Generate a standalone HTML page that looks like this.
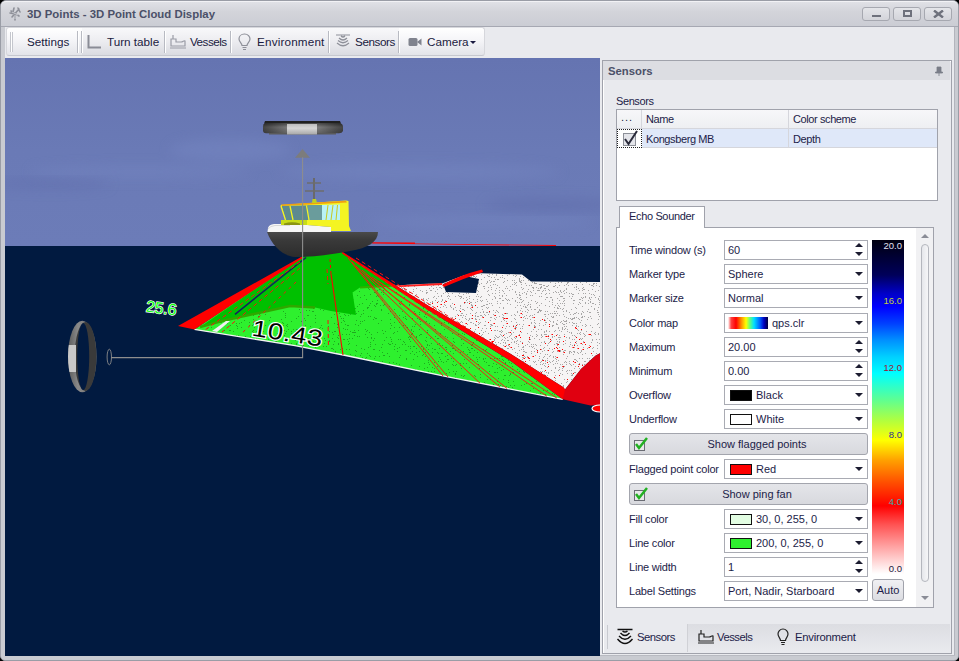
<!DOCTYPE html>
<html><head><meta charset="utf-8">
<style>
*{box-sizing:border-box;margin:0;padding:0}
html,body{width:959px;height:661px;overflow:hidden;background:#000}
body{position:relative;font-family:"Liberation Sans",sans-serif;font-size:11px;color:#1e1e46}
.a{position:absolute;white-space:nowrap}
#frame{left:0;top:0;width:959px;height:661px;background:#c9cbd1;border:1px solid #9a9da6;border-radius:6px 6px 5px 5px}
#title{left:1px;top:1px;width:957px;height:26px;background:linear-gradient(#e0e1e6,#d3d4da 40%,#cbcdd4);border-radius:5px 5px 0 0;border-top:1px solid #f2f2f5;border-bottom:1px solid #a6a8b2}
.wb{top:7px;width:28px;height:14px;border:1px solid #a6a8b0;border-radius:3px;background:linear-gradient(#e4e5e9,#d3d4da)}
#client{left:5px;top:27px;width:949px;height:628px;background:#e9eaee}
#tb{left:6px;top:27px;width:479px;height:29px;background:linear-gradient(#ffffff,#f5f5f8 45%,#e3e4e9);border:1px solid #d6d7dc;border-bottom-color:#c6c8cf;border-radius:3px}
.tbt{font-size:11.7px;color:#1a1a40;top:35px}
.sep{top:31px;width:2px;height:22px;border-left:1px solid #b8bac2;border-right:1px solid #fff}
#view{left:5px;top:58px;width:595px;height:598px;overflow:hidden}
#panel{left:602px;top:60px;width:350px;height:594px;border:1px solid #a0a2ab;background:#e9eaee;box-shadow:inset 1px 1px 0 #fff}
.lbl{left:629px;color:#1c1c48;letter-spacing:-0.2px}
.ed{left:724px;width:144px;height:20px;background:#fff;border:1px solid #a9abb3}
.ev{left:728px;color:#1c1c48}
.dd{left:855px;width:0;height:0;border-left:4px solid transparent;border-right:4px solid transparent;border-top:4px solid #1c1c30}
.up{left:855px;width:0;height:0;border-left:4px solid transparent;border-right:4px solid transparent;border-bottom:4px solid #1c1c30}
.sw{left:730px;width:22px;height:11px;border:1px solid #111}
.btn{left:629px;width:239px;height:22px;border:1px solid #a3a5ad;border-radius:3px;background:linear-gradient(#e4e5e9,#d8d9de)}
.btt{color:#1c1c48;text-align:center}
.cbl{left:874px;width:28px;text-align:right;font-size:9.5px}
</style></head><body>
<div id="frame" class="a"></div>
<div id="title" class="a"></div>
<div id="client" class="a"></div>
<div class="a" style="left:954px;top:27px;width:1px;height:629px;background:#b2b4bc"></div>
<div class="a" style="left:5px;top:655px;width:950px;height:1px;background:#b8bac1"></div>
<!-- app icon -->
<svg class="a" style="left:8px;top:6px" width="15" height="15" viewBox="0 0 15 15">
<g stroke="#8e9099" stroke-width="1.6" fill="none" stroke-linecap="round">
<path d="M7 14 L7 8 M3 5 L11 10 M11 3 L4 11 M2 7 L7 8 M10 2 L12 6 M6 2 L5 6"/></g>
<g stroke="#f4f4f6" stroke-width="0.6" fill="none"><path d="M7 13 L7 9 M4 6 L10 9"/></g>
</svg>
<div class="a" style="left:27px;top:7.5px;font-weight:bold;font-size:11.4px;color:#4b5068">3D Points - 3D Point Cloud Display</div>
<div class="a wb" style="left:862px"></div>
<div class="a wb" style="left:893px"></div>
<div class="a wb" style="left:924px"></div>
<div class="a" style="left:872px;top:15px;width:9px;height:2px;background:#6e717c"></div>
<div class="a" style="left:903px;top:10px;width:9px;height:7px;border:2px solid #6e717c;border-top-width:2px"></div>
<svg class="a" style="left:933px;top:10px" width="11" height="8" viewBox="0 0 11 8"><path d="M1 0.5 L10 7.5 M10 0.5 L1 7.5" stroke="#6e717c" stroke-width="2.4"/></svg>

<!-- toolbar -->
<div id="tb" class="a"></div>
<div class="a" style="left:10px;top:32px;width:1px;height:20px;background:#c4c6cd"></div>
<div class="a" style="left:12px;top:32px;width:1px;height:20px;background:#c4c6cd"></div>
<div class="a" style="left:11px;top:32px;width:1px;height:20px;background:#fff"></div>
<div class="a" style="left:82px;top:28px;width:317px;height:27px;background:linear-gradient(#f8f8fa,#ececf0 50%,#dadbe1)"></div>
<div class="a sep" style="left:77px"></div>
<div class="a sep" style="left:81px"></div>
<div class="a sep" style="left:164px"></div>
<div class="a sep" style="left:230px"></div>
<div class="a sep" style="left:328px"></div>
<div class="a sep" style="left:398px"></div>
<div class="a tbt" style="left:27px">Settings</div>
<div class="a tbt" style="left:107px">Turn table</div>
<div class="a tbt" style="left:190px;letter-spacing:-0.53px">Vessels</div>
<div class="a tbt" style="left:257px;letter-spacing:0.17px">Environment</div>
<div class="a tbt" style="left:355px;letter-spacing:-0.41px">Sensors</div>
<div class="a tbt" style="left:427px">Camera</div>
<div class="a" style="left:470px;top:41px;width:0;height:0;border-left:3px solid transparent;border-right:3px solid transparent;border-top:3px solid #1a1a40"></div>
<!-- toolbar icons -->
<svg class="a" style="left:86px;top:34px" width="18" height="16" viewBox="0 0 18 16"><path d="M2.5 1 V13.5 H15" stroke="#8a8c96" stroke-width="2" fill="none"/></svg>
<svg class="a" style="left:169px;top:34px" width="19" height="15" viewBox="0 0 19 15" fill="none" stroke="#9a9ca6" stroke-width="1.2"><path d="M4 1 V5 M2 5 H7 V8 H12 C14 8 15 6 16 7 V12 H2 Z M1 14 H17"/></svg>
<svg class="a" style="left:238px;top:33px" width="13" height="18" viewBox="0 0 13 18" fill="none" stroke="#8e9099" stroke-width="1.2"><path d="M6.5 1 C3 1 1 3.5 1 6 C1 9 4 10 4 12.5 H9 C9 10 12 9 12 6 C12 3.5 10 1 6.5 1 Z M4.5 14.5 H8.5 M5 16.5 H8"/></svg>
<svg class="a" style="left:335px;top:34px" width="16" height="15" viewBox="0 0 16 15" fill="none" stroke="#8e9099" stroke-width="1.2"><path d="M1 1 H15 M6 2 Q8 4 10 2 M4 4 Q8 8 12 4 M3 6.5 Q8 11 13 6.5 M2 9 Q8 14.5 14 9"/></svg>
<svg class="a" style="left:408px;top:37px" width="14" height="10" viewBox="0 0 14 10"><rect x="0.5" y="1" width="9" height="8" rx="1.5" fill="#80838e"/><path d="M9 5 L13.5 1.5 V8.5 Z" fill="#80838e"/></svg>

<!-- 3D view -->
<div id="view" class="a">
<svg width="595" height="598" viewBox="5 58 595 598" style="position:absolute;left:0;top:0">
<defs>
<linearGradient id="sky" x1="0" y1="0" x2="0" y2="1"><stop offset="0" stop-color="#6574b1"/><stop offset="0.5" stop-color="#6a7ab6"/><stop offset="1" stop-color="#6c7cb8"/></linearGradient>
<linearGradient id="hull" x1="0" y1="0" x2="0" y2="1"><stop offset="0" stop-color="#4a4a4a"/><stop offset="0.3" stop-color="#3a3a3a"/><stop offset="1" stop-color="#2c2c2c"/></linearGradient>
<linearGradient id="disc" x1="0" y1="0" x2="1" y2="0"><stop offset="0" stop-color="#454545"/><stop offset="0.3" stop-color="#7a7a7a"/><stop offset="0.7" stop-color="#7a7a7a"/><stop offset="1" stop-color="#454545"/></linearGradient><linearGradient id="discv" x1="0" y1="0" x2="0" y2="1"><stop offset="0" stop-color="#000" stop-opacity="0.45"/><stop offset="0.4" stop-color="#000" stop-opacity="0"/><stop offset="1" stop-color="#000" stop-opacity="0.2"/></linearGradient>
<linearGradient id="discc" x1="0" y1="0" x2="0" y2="1"><stop offset="0" stop-color="#bdbdbd"/><stop offset="0.4" stop-color="#d6d6d6"/><stop offset="1" stop-color="#a8a8a8"/></linearGradient>
<linearGradient id="ring" x1="0" y1="0" x2="1" y2="0"><stop offset="0" stop-color="#5a5a5a"/><stop offset="0.35" stop-color="#8a8a8a"/><stop offset="1" stop-color="#6a6a6a"/></linearGradient>
<clipPath id="ringclip"><ellipse cx="82.3" cy="356.5" rx="14.3" ry="35.8"/></clipPath>
<clipPath id="sbclip"><path d="M396 285.4 L420 284 L442 283.5 L465 275 L481 273.3 L522 274.5 L531 281.4 L600 282 L600 353.3 L595.4 355.7 L581 369 L565 389.6 L563 387 L510 353.6 L430 306.8 Z"/></clipPath>
<clipPath id="lgclip"><path d="M352.5 292.5 L360 287.5 L395 286 L430 311 L510 360.5 L562.7 399.3 L446.7 376.7 L343.3 355 L295 345.6 L194.4 329.4 L222 321 L290 306 L315 307.5 L331 311 L356 315 Z"/></clipPath>
<filter id="blur4"><feGaussianBlur stdDeviation="6"/></filter>
</defs>
<rect x="5" y="58" width="595" height="188" fill="url(#sky)"/>
<g filter="url(#blur4)" fill="#7384c0" opacity="0.6">
<ellipse cx="230" cy="150" rx="60" ry="11"/>
<ellipse cx="420" cy="172" rx="140" ry="8"/>
<ellipse cx="140" cy="172" rx="110" ry="6"/>
<ellipse cx="480" cy="222" rx="110" ry="6"/>
</g>
<g filter="url(#blur4)" fill="#5e6caa" opacity="0.5">
<ellipse cx="555" cy="205" rx="70" ry="7"/>
<ellipse cx="50" cy="184" rx="60" ry="5"/>
</g>
<rect x="5" y="246" width="595" height="410" fill="#011a40"/>
<!-- horizon red line -->
<path d="M372 242.3 L415 242.6 L415 243.6 L556 245 L556 246 L372 243.6 Z" fill="#ff0000"/>
<!-- seabed white -->
<path d="M396 285.4 L420 284 L442 283.5 L465 275 L481 273.3 L522 274.5 L531 281.4 L600 282 L600 353.3 L595.4 355.7 L581 369 L565 389.6 L563 387 L510 353.6 L430 306.8 Z" fill="#f6f4f4"/>
<g clip-path="url(#sbclip)"><path d="M511 383h1v1h-1zM539 382h1v1h-1zM595 332h1v1h-1zM511 338h1v1h-1zM546 297h1v1h-1zM443 375h1v1h-1zM527 333h1v1h-1zM557 351h1v1h-1zM599 296h1v1h-1zM420 330h1v1h-1zM473 291h1v1h-1zM419 341h1v1h-1zM573 354h1v1h-1zM406 349h1v1h-1zM497 330h1v1h-1zM563 367h1v1h-1zM553 356h1v1h-1zM436 352h1v1h-1zM399 379h1v1h-1zM531 281h1v1h-1zM411 277h1v1h-1zM444 385h1v1h-1zM457 349h1v1h-1zM403 372h1v1h-1zM514 314h1v1h-1zM508 348h1v1h-1zM446 339h1v1h-1zM455 354h1v1h-1zM471 336h1v1h-1zM397 357h1v1h-1zM417 331h1v1h-1zM563 308h1v1h-1zM500 343h1v1h-1zM417 363h1v1h-1zM461 313h1v1h-1zM590 302h1v1h-1zM527 309h1v1h-1zM403 281h1v1h-1zM540 371h1v1h-1zM423 324h1v1h-1zM423 381h1v1h-1zM470 322h1v1h-1zM413 275h1v1h-1zM571 273h1v1h-1zM450 299h1v1h-1zM409 333h1v1h-1zM492 363h1v1h-1zM497 326h1v1h-1zM414 345h1v1h-1zM557 298h1v1h-1zM595 359h1v1h-1zM465 316h1v1h-1zM418 312h1v1h-1zM481 274h1v1h-1zM500 370h1v1h-1zM426 290h1v1h-1zM459 363h1v1h-1zM421 274h1v1h-1zM411 332h1v1h-1zM520 295h1v1h-1zM570 344h1v1h-1zM444 330h1v1h-1zM526 297h1v1h-1zM583 371h1v1h-1zM429 326h1v1h-1zM560 322h1v1h-1zM425 323h1v1h-1zM503 300h1v1h-1zM396 307h1v1h-1zM547 311h1v1h-1zM401 299h1v1h-1zM443 323h1v1h-1zM550 355h1v1h-1zM543 285h1v1h-1zM406 291h1v1h-1zM450 329h1v1h-1zM462 274h1v1h-1zM593 351h1v1h-1zM480 379h1v1h-1zM471 322h1v1h-1zM414 282h1v1h-1zM419 299h1v1h-1zM545 354h1v1h-1zM458 274h1v1h-1zM549 320h1v1h-1zM491 352h1v1h-1zM512 289h1v1h-1zM546 334h1v1h-1zM543 290h1v1h-1zM494 296h1v1h-1zM556 292h1v1h-1zM475 389h1v1h-1zM454 377h1v1h-1zM552 304h1v1h-1zM581 297h1v1h-1zM436 367h1v1h-1zM557 343h1v1h-1zM446 360h1v1h-1zM495 385h1v1h-1zM519 350h1v1h-1zM416 326h1v1h-1zM408 286h1v1h-1zM423 277h1v1h-1zM527 305h1v1h-1zM457 367h1v1h-1zM576 323h1v1h-1zM461 326h1v1h-1zM548 335h1v1h-1zM471 339h1v1h-1zM440 365h1v1h-1zM413 289h1v1h-1zM454 334h1v1h-1zM539 356h1v1h-1zM553 351h1v1h-1zM414 308h1v1h-1zM450 299h1v1h-1zM587 275h1v1h-1zM413 307h1v1h-1zM501 330h1v1h-1zM459 280h1v1h-1zM407 295h1v1h-1zM468 320h1v1h-1zM531 346h1v1h-1zM429 284h1v1h-1zM488 290h1v1h-1zM511 315h1v1h-1zM564 366h1v1h-1zM572 339h1v1h-1zM545 290h1v1h-1zM547 277h1v1h-1zM400 333h1v1h-1zM487 362h1v1h-1zM475 277h1v1h-1zM401 349h1v1h-1zM558 282h1v1h-1zM519 281h1v1h-1zM583 312h1v1h-1zM477 290h1v1h-1zM414 282h1v1h-1zM511 342h1v1h-1zM490 367h1v1h-1zM407 388h1v1h-1zM584 367h1v1h-1zM576 289h1v1h-1zM599 316h1v1h-1zM486 283h1v1h-1zM571 333h1v1h-1zM415 384h1v1h-1zM502 374h1v1h-1zM403 383h1v1h-1zM523 346h1v1h-1zM399 352h1v1h-1zM565 321h1v1h-1zM493 347h1v1h-1zM399 350h1v1h-1zM414 283h1v1h-1zM419 354h1v1h-1zM425 305h1v1h-1zM502 366h1v1h-1zM480 322h1v1h-1zM584 361h1v1h-1zM544 331h1v1h-1zM508 332h1v1h-1zM534 283h1v1h-1zM528 369h1v1h-1zM527 276h1v1h-1zM475 349h1v1h-1zM418 334h1v1h-1zM401 302h1v1h-1zM574 287h1v1h-1zM523 372h1v1h-1zM553 357h1v1h-1zM520 305h1v1h-1zM398 320h1v1h-1zM473 291h1v1h-1zM569 351h1v1h-1zM447 339h1v1h-1zM439 369h1v1h-1zM483 357h1v1h-1zM509 336h1v1h-1zM457 314h1v1h-1zM499 358h1v1h-1zM460 298h1v1h-1zM558 328h1v1h-1zM589 298h1v1h-1zM450 322h1v1h-1zM452 347h1v1h-1zM477 299h1v1h-1zM430 290h1v1h-1zM523 317h1v1h-1zM406 364h1v1h-1zM412 308h1v1h-1zM439 287h1v1h-1zM511 333h1v1h-1zM466 300h1v1h-1zM501 321h1v1h-1zM556 339h1v1h-1zM522 359h1v1h-1zM476 364h1v1h-1zM555 330h1v1h-1zM478 282h1v1h-1zM404 308h1v1h-1zM551 278h1v1h-1zM569 363h1v1h-1zM467 346h1v1h-1zM486 312h1v1h-1zM562 374h1v1h-1zM540 275h1v1h-1zM560 290h1v1h-1zM499 331h1v1h-1zM444 276h1v1h-1zM592 379h1v1h-1zM464 303h1v1h-1zM595 291h1v1h-1zM599 279h1v1h-1zM557 287h1v1h-1zM510 286h1v1h-1zM557 341h1v1h-1zM563 354h1v1h-1zM490 282h1v1h-1zM571 298h1v1h-1zM447 378h1v1h-1zM517 305h1v1h-1zM441 364h1v1h-1zM398 369h1v1h-1zM516 341h1v1h-1zM578 277h1v1h-1zM441 301h1v1h-1zM465 372h1v1h-1zM484 342h1v1h-1zM574 339h1v1h-1zM524 351h1v1h-1zM589 293h1v1h-1zM496 381h1v1h-1zM598 362h1v1h-1zM453 284h1v1h-1zM501 387h1v1h-1zM580 322h1v1h-1zM429 330h1v1h-1zM512 298h1v1h-1zM556 386h1v1h-1zM397 321h1v1h-1zM536 345h1v1h-1zM563 385h1v1h-1zM524 374h1v1h-1zM483 332h1v1h-1zM479 356h1v1h-1zM448 285h1v1h-1zM580 383h1v1h-1zM560 364h1v1h-1zM427 300h1v1h-1zM458 388h1v1h-1zM495 284h1v1h-1zM475 341h1v1h-1zM598 314h1v1h-1zM463 389h1v1h-1zM579 382h1v1h-1zM400 317h1v1h-1zM525 283h1v1h-1zM405 329h1v1h-1zM483 343h1v1h-1zM503 371h1v1h-1zM466 335h1v1h-1zM403 300h1v1h-1zM412 327h1v1h-1zM404 295h1v1h-1zM532 315h1v1h-1zM571 373h1v1h-1zM431 333h1v1h-1zM434 339h1v1h-1zM581 339h1v1h-1zM569 361h1v1h-1zM508 385h1v1h-1zM522 347h1v1h-1zM572 284h1v1h-1zM590 301h1v1h-1zM508 340h1v1h-1zM539 310h1v1h-1zM582 344h1v1h-1zM559 294h1v1h-1zM529 338h1v1h-1zM539 305h1v1h-1zM475 358h1v1h-1zM493 381h1v1h-1zM552 299h1v1h-1zM473 381h1v1h-1zM432 342h1v1h-1zM530 307h1v1h-1zM542 336h1v1h-1zM447 325h1v1h-1zM533 287h1v1h-1zM524 273h1v1h-1zM550 321h1v1h-1zM403 341h1v1h-1zM407 339h1v1h-1zM498 342h1v1h-1zM540 288h1v1h-1zM521 284h1v1h-1zM572 294h1v1h-1zM412 341h1v1h-1zM513 325h1v1h-1zM499 307h1v1h-1zM459 333h1v1h-1zM522 289h1v1h-1zM482 328h1v1h-1zM517 340h1v1h-1zM477 286h1v1h-1zM445 326h1v1h-1zM554 276h1v1h-1zM462 289h1v1h-1zM575 372h1v1h-1zM401 277h1v1h-1zM445 292h1v1h-1zM454 274h1v1h-1zM571 309h1v1h-1zM478 365h1v1h-1zM486 304h1v1h-1zM554 336h1v1h-1zM422 336h1v1h-1zM583 347h1v1h-1zM427 382h1v1h-1zM526 352h1v1h-1zM460 364h1v1h-1zM446 362h1v1h-1zM531 385h1v1h-1zM507 275h1v1h-1zM492 354h1v1h-1zM501 378h1v1h-1zM531 351h1v1h-1zM436 341h1v1h-1zM448 383h1v1h-1zM557 341h1v1h-1zM559 300h1v1h-1zM531 300h1v1h-1zM534 351h1v1h-1zM546 382h1v1h-1zM430 302h1v1h-1zM585 353h1v1h-1zM484 388h1v1h-1zM442 313h1v1h-1zM550 313h1v1h-1zM445 300h1v1h-1zM595 297h1v1h-1zM420 290h1v1h-1zM457 289h1v1h-1zM582 284h1v1h-1zM462 322h1v1h-1zM420 328h1v1h-1zM503 342h1v1h-1zM598 363h1v1h-1zM428 298h1v1h-1zM499 353h1v1h-1zM571 375h1v1h-1zM400 285h1v1h-1zM447 345h1v1h-1zM570 318h1v1h-1zM488 287h1v1h-1zM576 337h1v1h-1zM558 370h1v1h-1zM483 337h1v1h-1zM571 379h1v1h-1zM444 375h1v1h-1zM414 334h1v1h-1zM423 276h1v1h-1zM405 370h1v1h-1zM537 351h1v1h-1zM527 388h1v1h-1zM541 334h1v1h-1zM433 297h1v1h-1zM443 287h1v1h-1zM448 295h1v1h-1zM436 309h1v1h-1zM568 285h1v1h-1zM544 280h1v1h-1zM430 360h1v1h-1zM514 282h1v1h-1zM591 285h1v1h-1zM479 323h1v1h-1zM515 327h1v1h-1zM527 318h1v1h-1zM506 299h1v1h-1zM549 320h1v1h-1zM399 354h1v1h-1zM575 278h1v1h-1zM447 296h1v1h-1zM500 331h1v1h-1zM488 367h1v1h-1zM490 324h1v1h-1zM445 350h1v1h-1zM438 285h1v1h-1zM527 374h1v1h-1zM399 314h1v1h-1zM417 375h1v1h-1zM576 385h1v1h-1zM557 324h1v1h-1zM541 349h1v1h-1zM444 337h1v1h-1zM545 316h1v1h-1zM591 306h1v1h-1zM467 389h1v1h-1zM425 368h1v1h-1zM586 372h1v1h-1zM436 377h1v1h-1zM499 290h1v1h-1zM480 385h1v1h-1zM533 361h1v1h-1zM490 371h1v1h-1zM506 370h1v1h-1zM442 324h1v1h-1zM448 365h1v1h-1zM443 282h1v1h-1zM483 311h1v1h-1zM516 285h1v1h-1zM398 386h1v1h-1zM487 354h1v1h-1zM555 279h1v1h-1zM455 307h1v1h-1zM566 311h1v1h-1zM482 300h1v1h-1zM564 324h1v1h-1zM541 296h1v1h-1zM532 282h1v1h-1zM495 338h1v1h-1zM523 355h1v1h-1zM450 362h1v1h-1zM426 370h1v1h-1zM497 346h1v1h-1zM401 287h1v1h-1zM553 286h1v1h-1zM585 303h1v1h-1zM461 329h1v1h-1zM498 337h1v1h-1zM408 370h1v1h-1zM446 355h1v1h-1zM492 274h1v1h-1zM421 306h1v1h-1zM460 308h1v1h-1zM483 343h1v1h-1zM534 338h1v1h-1zM502 339h1v1h-1zM541 381h1v1h-1zM421 354h1v1h-1zM509 376h1v1h-1zM561 282h1v1h-1zM536 349h1v1h-1zM567 370h1v1h-1zM407 322h1v1h-1zM436 322h1v1h-1zM516 294h1v1h-1zM522 342h1v1h-1zM552 349h1v1h-1zM410 327h1v1h-1zM522 326h1v1h-1zM468 340h1v1h-1zM498 349h1v1h-1zM475 319h1v1h-1zM531 309h1v1h-1zM519 356h1v1h-1zM465 344h1v1h-1zM468 357h1v1h-1zM579 368h1v1h-1zM471 276h1v1h-1zM399 371h1v1h-1zM458 347h1v1h-1zM406 354h1v1h-1zM436 325h1v1h-1zM589 360h1v1h-1zM495 279h1v1h-1zM476 368h1v1h-1zM497 279h1v1h-1zM544 365h1v1h-1zM477 282h1v1h-1zM453 327h1v1h-1zM580 334h1v1h-1zM460 369h1v1h-1zM458 278h1v1h-1zM529 285h1v1h-1zM581 389h1v1h-1zM515 291h1v1h-1zM458 350h1v1h-1zM576 287h1v1h-1zM408 352h1v1h-1zM502 331h1v1h-1zM426 299h1v1h-1zM409 318h1v1h-1zM531 292h1v1h-1zM427 319h1v1h-1zM509 290h1v1h-1zM566 326h1v1h-1zM512 349h1v1h-1zM463 354h1v1h-1zM545 360h1v1h-1zM503 319h1v1h-1zM595 368h1v1h-1zM531 377h1v1h-1zM431 310h1v1h-1zM583 289h1v1h-1zM457 334h1v1h-1zM425 337h1v1h-1zM475 373h1v1h-1zM525 352h1v1h-1zM487 308h1v1h-1zM465 351h1v1h-1zM571 365h1v1h-1zM540 362h1v1h-1zM547 297h1v1h-1zM558 308h1v1h-1zM588 303h1v1h-1zM444 304h1v1h-1zM524 356h1v1h-1zM446 385h1v1h-1zM570 278h1v1h-1zM556 280h1v1h-1zM398 307h1v1h-1zM462 327h1v1h-1zM402 352h1v1h-1zM405 286h1v1h-1zM452 342h1v1h-1zM467 282h1v1h-1zM589 284h1v1h-1zM569 293h1v1h-1zM536 303h1v1h-1zM557 320h1v1h-1zM519 334h1v1h-1zM486 299h1v1h-1zM482 316h1v1h-1zM522 368h1v1h-1zM430 380h1v1h-1zM415 375h1v1h-1zM426 330h1v1h-1zM555 380h1v1h-1zM592 371h1v1h-1zM450 329h1v1h-1zM504 368h1v1h-1zM462 322h1v1h-1zM434 320h1v1h-1zM435 356h1v1h-1zM548 314h1v1h-1zM470 343h1v1h-1zM590 368h1v1h-1zM443 327h1v1h-1zM563 320h1v1h-1zM544 285h1v1h-1zM514 385h1v1h-1zM478 283h1v1h-1zM535 283h1v1h-1zM506 345h1v1h-1zM541 335h1v1h-1zM571 332h1v1h-1zM472 378h1v1h-1zM594 274h1v1h-1zM415 312h1v1h-1zM450 389h1v1h-1zM565 350h1v1h-1zM416 361h1v1h-1zM473 336h1v1h-1zM581 370h1v1h-1zM573 314h1v1h-1zM468 385h1v1h-1zM432 301h1v1h-1zM487 357h1v1h-1zM581 314h1v1h-1zM489 389h1v1h-1zM426 314h1v1h-1zM577 329h1v1h-1zM541 349h1v1h-1zM571 389h1v1h-1zM467 329h1v1h-1zM531 375h1v1h-1zM474 331h1v1h-1zM477 301h1v1h-1zM498 366h1v1h-1zM528 304h1v1h-1zM417 319h1v1h-1zM489 276h1v1h-1zM489 359h1v1h-1zM497 347h1v1h-1zM495 374h1v1h-1zM445 367h1v1h-1zM540 320h1v1h-1zM495 342h1v1h-1zM435 380h1v1h-1zM547 345h1v1h-1zM441 295h1v1h-1zM418 370h1v1h-1zM512 385h1v1h-1zM468 376h1v1h-1zM401 301h1v1h-1zM528 280h1v1h-1zM535 293h1v1h-1zM541 310h1v1h-1zM401 356h1v1h-1zM504 281h1v1h-1zM544 342h1v1h-1zM474 373h1v1h-1zM535 283h1v1h-1zM481 283h1v1h-1zM466 367h1v1h-1zM422 388h1v1h-1zM476 283h1v1h-1zM402 354h1v1h-1zM563 291h1v1h-1zM420 368h1v1h-1zM562 327h1v1h-1zM458 364h1v1h-1zM452 335h1v1h-1zM591 389h1v1h-1zM529 316h1v1h-1zM591 331h1v1h-1zM496 317h1v1h-1zM482 376h1v1h-1zM481 359h1v1h-1zM430 336h1v1h-1zM520 341h1v1h-1zM580 282h1v1h-1zM577 352h1v1h-1zM407 325h1v1h-1zM589 378h1v1h-1zM566 317h1v1h-1zM396 376h1v1h-1zM492 379h1v1h-1zM418 386h1v1h-1zM514 342h1v1h-1zM559 276h1v1h-1zM530 319h1v1h-1zM577 274h1v1h-1zM424 326h1v1h-1zM503 291h1v1h-1zM458 367h1v1h-1zM437 354h1v1h-1zM492 360h1v1h-1zM438 314h1v1h-1zM448 322h1v1h-1zM504 340h1v1h-1zM470 308h1v1h-1zM411 333h1v1h-1zM474 366h1v1h-1zM425 311h1v1h-1zM561 292h1v1h-1zM594 295h1v1h-1zM411 369h1v1h-1zM513 275h1v1h-1zM545 334h1v1h-1zM405 313h1v1h-1zM423 298h1v1h-1zM443 318h1v1h-1zM451 348h1v1h-1zM456 349h1v1h-1zM579 333h1v1h-1zM548 338h1v1h-1zM453 329h1v1h-1zM443 387h1v1h-1zM467 324h1v1h-1zM440 389h1v1h-1zM589 312h1v1h-1zM556 343h1v1h-1zM536 334h1v1h-1zM462 335h1v1h-1zM499 316h1v1h-1zM565 343h1v1h-1zM593 284h1v1h-1zM519 383h1v1h-1zM452 324h1v1h-1zM408 300h1v1h-1zM430 375h1v1h-1zM494 340h1v1h-1zM599 339h1v1h-1zM594 308h1v1h-1zM597 280h1v1h-1zM564 303h1v1h-1zM398 384h1v1h-1zM516 388h1v1h-1zM491 330h1v1h-1zM599 304h1v1h-1zM578 326h1v1h-1zM551 384h1v1h-1zM436 326h1v1h-1zM436 371h1v1h-1zM478 291h1v1h-1zM462 389h1v1h-1zM528 289h1v1h-1zM559 367h1v1h-1zM554 307h1v1h-1zM528 341h1v1h-1zM409 292h1v1h-1zM542 371h1v1h-1zM441 273h1v1h-1zM448 378h1v1h-1zM434 378h1v1h-1zM428 283h1v1h-1zM486 307h1v1h-1zM553 364h1v1h-1zM531 285h1v1h-1zM518 361h1v1h-1zM515 283h1v1h-1zM587 348h1v1h-1zM535 382h1v1h-1zM525 311h1v1h-1zM400 374h1v1h-1zM444 326h1v1h-1zM445 360h1v1h-1zM419 373h1v1h-1zM508 299h1v1h-1zM405 342h1v1h-1zM501 340h1v1h-1zM522 293h1v1h-1zM475 313h1v1h-1zM475 324h1v1h-1zM415 344h1v1h-1zM474 332h1v1h-1zM566 364h1v1h-1zM413 319h1v1h-1zM415 360h1v1h-1zM431 286h1v1h-1zM566 323h1v1h-1zM569 332h1v1h-1zM587 373h1v1h-1zM427 356h1v1h-1zM509 274h1v1h-1zM492 364h1v1h-1zM577 333h1v1h-1zM456 310h1v1h-1zM540 287h1v1h-1zM513 371h1v1h-1zM398 382h1v1h-1zM580 299h1v1h-1zM553 292h1v1h-1zM470 353h1v1h-1zM492 342h1v1h-1zM587 311h1v1h-1zM482 369h1v1h-1zM496 344h1v1h-1zM566 284h1v1h-1zM461 297h1v1h-1zM447 321h1v1h-1zM583 287h1v1h-1zM480 312h1v1h-1zM466 345h1v1h-1zM516 365h1v1h-1zM559 315h1v1h-1zM510 378h1v1h-1zM493 284h1v1h-1zM422 291h1v1h-1zM555 285h1v1h-1zM429 359h1v1h-1zM557 363h1v1h-1zM441 296h1v1h-1zM445 324h1v1h-1zM405 380h1v1h-1zM514 348h1v1h-1zM576 284h1v1h-1zM421 302h1v1h-1zM404 293h1v1h-1zM427 328h1v1h-1zM500 371h1v1h-1zM414 316h1v1h-1zM505 338h1v1h-1zM431 355h1v1h-1zM448 371h1v1h-1zM433 378h1v1h-1zM572 322h1v1h-1zM519 315h1v1h-1zM501 352h1v1h-1zM399 366h1v1h-1zM498 351h1v1h-1zM575 313h1v1h-1zM597 374h1v1h-1zM458 357h1v1h-1zM551 340h1v1h-1zM400 306h1v1h-1zM480 297h1v1h-1zM483 312h1v1h-1zM562 329h1v1h-1zM423 344h1v1h-1zM492 299h1v1h-1zM526 315h1v1h-1zM597 310h1v1h-1zM422 351h1v1h-1zM578 293h1v1h-1zM460 371h1v1h-1zM533 388h1v1h-1zM472 343h1v1h-1zM455 318h1v1h-1zM552 337h1v1h-1zM527 291h1v1h-1zM542 364h1v1h-1zM446 339h1v1h-1zM579 363h1v1h-1zM446 345h1v1h-1zM402 353h1v1h-1zM564 298h1v1h-1zM594 283h1v1h-1zM430 304h1v1h-1zM518 346h1v1h-1zM502 362h1v1h-1zM481 315h1v1h-1zM419 384h1v1h-1zM488 307h1v1h-1zM514 386h1v1h-1zM427 330h1v1h-1zM582 290h1v1h-1zM457 388h1v1h-1zM541 342h1v1h-1zM535 344h1v1h-1zM412 344h1v1h-1zM463 294h1v1h-1zM586 387h1v1h-1zM481 349h1v1h-1zM433 288h1v1h-1zM396 309h1v1h-1zM571 387h1v1h-1zM489 303h1v1h-1zM590 346h1v1h-1zM488 379h1v1h-1zM438 296h1v1h-1zM548 343h1v1h-1zM415 331h1v1h-1zM404 324h1v1h-1zM442 373h1v1h-1zM564 290h1v1h-1zM474 369h1v1h-1zM567 381h1v1h-1zM584 389h1v1h-1zM493 351h1v1h-1zM547 354h1v1h-1zM591 275h1v1h-1zM436 298h1v1h-1zM501 332h1v1h-1zM404 291h1v1h-1zM531 322h1v1h-1zM426 345h1v1h-1zM499 295h1v1h-1zM482 339h1v1h-1zM429 306h1v1h-1zM458 345h1v1h-1zM481 279h1v1h-1zM560 373h1v1h-1zM405 365h1v1h-1zM567 373h1v1h-1zM433 324h1v1h-1zM523 349h1v1h-1zM422 333h1v1h-1zM484 325h1v1h-1zM555 389h1v1h-1zM572 345h1v1h-1zM590 325h1v1h-1zM588 309h1v1h-1zM520 386h1v1h-1zM514 380h1v1h-1zM572 325h1v1h-1zM507 288h1v1h-1zM540 287h1v1h-1zM530 315h1v1h-1zM530 339h1v1h-1zM506 326h1v1h-1zM402 314h1v1h-1zM409 310h1v1h-1zM581 351h1v1h-1zM506 366h1v1h-1zM492 349h1v1h-1zM478 369h1v1h-1zM598 312h1v1h-1zM547 385h1v1h-1zM413 304h1v1h-1zM427 381h1v1h-1zM510 304h1v1h-1zM524 384h1v1h-1zM497 279h1v1h-1zM517 361h1v1h-1zM422 340h1v1h-1zM457 342h1v1h-1zM474 357h1v1h-1zM497 303h1v1h-1zM413 389h1v1h-1zM583 384h1v1h-1zM566 320h1v1h-1zM535 326h1v1h-1zM540 376h1v1h-1zM438 301h1v1h-1zM562 368h1v1h-1zM503 345h1v1h-1zM427 388h1v1h-1zM414 285h1v1h-1zM529 374h1v1h-1zM429 288h1v1h-1zM533 346h1v1h-1zM512 273h1v1h-1zM471 304h1v1h-1zM582 311h1v1h-1zM402 314h1v1h-1zM440 281h1v1h-1zM508 387h1v1h-1zM511 377h1v1h-1zM531 323h1v1h-1zM432 318h1v1h-1zM573 347h1v1h-1zM455 278h1v1h-1zM474 276h1v1h-1zM512 388h1v1h-1zM476 312h1v1h-1zM479 336h1v1h-1zM432 372h1v1h-1zM594 333h1v1h-1zM448 298h1v1h-1zM471 382h1v1h-1zM573 387h1v1h-1zM411 298h1v1h-1zM476 380h1v1h-1zM486 388h1v1h-1zM516 275h1v1h-1zM440 354h1v1h-1zM574 344h1v1h-1zM447 341h1v1h-1zM557 303h1v1h-1zM445 385h1v1h-1zM408 356h1v1h-1zM423 312h1v1h-1zM581 377h1v1h-1zM476 388h1v1h-1zM466 384h1v1h-1zM503 364h1v1h-1zM430 315h1v1h-1zM574 372h1v1h-1zM509 326h1v1h-1zM416 294h1v1h-1zM453 383h1v1h-1zM474 288h1v1h-1zM577 361h1v1h-1zM446 307h1v1h-1zM442 365h1v1h-1zM456 337h1v1h-1zM566 310h1v1h-1zM598 307h1v1h-1zM491 375h1v1h-1zM565 340h1v1h-1zM425 348h1v1h-1zM528 302h1v1h-1zM473 387h1v1h-1zM442 358h1v1h-1zM453 308h1v1h-1zM429 354h1v1h-1zM566 284h1v1h-1zM514 282h1v1h-1zM508 340h1v1h-1zM414 340h1v1h-1zM407 273h1v1h-1zM549 348h1v1h-1zM468 341h1v1h-1zM460 327h1v1h-1zM541 284h1v1h-1zM438 309h1v1h-1zM589 297h1v1h-1zM458 295h1v1h-1zM467 366h1v1h-1zM536 276h1v1h-1zM443 374h1v1h-1zM434 387h1v1h-1zM404 352h1v1h-1zM514 369h1v1h-1zM545 322h1v1h-1zM396 387h1v1h-1zM523 280h1v1h-1zM442 281h1v1h-1zM538 372h1v1h-1zM561 389h1v1h-1zM488 314h1v1h-1zM564 334h1v1h-1zM596 277h1v1h-1zM528 310h1v1h-1zM525 378h1v1h-1zM558 360h1v1h-1zM529 368h1v1h-1zM532 295h1v1h-1zM548 372h1v1h-1zM593 294h1v1h-1zM424 350h1v1h-1zM507 303h1v1h-1zM567 329h1v1h-1zM536 371h1v1h-1zM461 373h1v1h-1zM579 374h1v1h-1zM580 303h1v1h-1zM462 335h1v1h-1zM535 301h1v1h-1zM544 350h1v1h-1zM523 306h1v1h-1zM405 298h1v1h-1zM548 364h1v1h-1zM409 346h1v1h-1zM510 384h1v1h-1zM442 314h1v1h-1zM434 350h1v1h-1zM400 350h1v1h-1zM523 376h1v1h-1zM507 337h1v1h-1zM509 365h1v1h-1zM463 382h1v1h-1zM403 282h1v1h-1zM425 389h1v1h-1zM441 345h1v1h-1zM559 342h1v1h-1zM544 374h1v1h-1zM580 303h1v1h-1zM555 291h1v1h-1zM409 312h1v1h-1zM504 278h1v1h-1zM574 313h1v1h-1zM555 367h1v1h-1zM530 372h1v1h-1zM463 370h1v1h-1zM546 336h1v1h-1zM418 356h1v1h-1zM526 294h1v1h-1zM492 305h1v1h-1zM459 293h1v1h-1zM523 361h1v1h-1zM564 379h1v1h-1zM548 373h1v1h-1zM512 280h1v1h-1zM476 325h1v1h-1zM515 319h1v1h-1zM574 300h1v1h-1zM576 278h1v1h-1zM428 335h1v1h-1zM589 370h1v1h-1zM549 290h1v1h-1zM433 368h1v1h-1zM512 339h1v1h-1zM586 278h1v1h-1zM396 303h1v1h-1zM500 386h1v1h-1zM530 291h1v1h-1zM419 323h1v1h-1zM538 311h1v1h-1zM516 327h1v1h-1zM415 277h1v1h-1zM570 364h1v1h-1zM591 366h1v1h-1zM552 302h1v1h-1zM471 305h1v1h-1zM426 343h1v1h-1zM457 326h1v1h-1zM514 284h1v1h-1zM454 319h1v1h-1zM475 316h1v1h-1zM552 300h1v1h-1zM406 293h1v1h-1zM499 347h1v1h-1zM562 280h1v1h-1zM584 316h1v1h-1zM541 361h1v1h-1zM547 386h1v1h-1zM441 332h1v1h-1zM496 380h1v1h-1zM450 321h1v1h-1zM492 373h1v1h-1zM408 300h1v1h-1zM503 317h1v1h-1zM459 296h1v1h-1zM599 343h1v1h-1zM437 334h1v1h-1zM448 324h1v1h-1zM450 349h1v1h-1zM515 370h1v1h-1zM474 333h1v1h-1zM510 335h1v1h-1zM556 359h1v1h-1zM442 383h1v1h-1zM520 299h1v1h-1zM534 322h1v1h-1zM503 282h1v1h-1zM408 361h1v1h-1zM466 319h1v1h-1zM466 352h1v1h-1zM400 339h1v1h-1zM442 367h1v1h-1zM463 338h1v1h-1zM496 345h1v1h-1zM562 364h1v1h-1zM451 307h1v1h-1zM422 319h1v1h-1zM410 292h1v1h-1zM582 372h1v1h-1zM488 290h1v1h-1zM592 303h1v1h-1zM581 380h1v1h-1zM426 275h1v1h-1zM478 380h1v1h-1zM494 330h1v1h-1zM417 382h1v1h-1zM493 314h1v1h-1zM461 371h1v1h-1zM528 358h1v1h-1zM410 311h1v1h-1zM496 350h1v1h-1zM457 335h1v1h-1zM406 297h1v1h-1zM434 338h1v1h-1zM548 289h1v1h-1zM404 299h1v1h-1zM475 325h1v1h-1zM504 334h1v1h-1zM535 361h1v1h-1zM430 339h1v1h-1zM576 343h1v1h-1zM462 313h1v1h-1zM581 330h1v1h-1zM566 321h1v1h-1zM433 385h1v1h-1zM448 379h1v1h-1zM467 341h1v1h-1zM578 330h1v1h-1zM499 290h1v1h-1zM494 339h1v1h-1zM487 301h1v1h-1zM422 310h1v1h-1zM490 317h1v1h-1zM552 300h1v1h-1zM431 278h1v1h-1zM402 368h1v1h-1zM557 334h1v1h-1zM540 274h1v1h-1zM590 368h1v1h-1zM472 357h1v1h-1zM567 281h1v1h-1zM451 344h1v1h-1zM572 318h1v1h-1zM566 288h1v1h-1zM594 384h1v1h-1zM491 303h1v1h-1zM596 353h1v1h-1zM462 284h1v1h-1zM505 288h1v1h-1zM496 336h1v1h-1zM411 335h1v1h-1zM494 315h1v1h-1zM468 336h1v1h-1zM576 308h1v1h-1zM452 293h1v1h-1zM499 298h1v1h-1zM517 371h1v1h-1zM438 317h1v1h-1zM566 364h1v1h-1zM457 339h1v1h-1zM419 368h1v1h-1zM483 389h1v1h-1zM504 375h1v1h-1zM434 334h1v1h-1zM545 305h1v1h-1zM575 382h1v1h-1zM537 312h1v1h-1zM575 275h1v1h-1zM496 288h1v1h-1zM489 389h1v1h-1zM412 389h1v1h-1zM499 307h1v1h-1zM409 321h1v1h-1zM522 381h1v1h-1zM545 311h1v1h-1zM516 365h1v1h-1zM479 386h1v1h-1zM460 282h1v1h-1zM402 277h1v1h-1zM484 314h1v1h-1zM491 345h1v1h-1zM472 306h1v1h-1zM567 386h1v1h-1zM443 355h1v1h-1zM516 322h1v1h-1zM553 316h1v1h-1zM488 276h1v1h-1zM543 363h1v1h-1zM451 371h1v1h-1zM415 353h1v1h-1zM408 352h1v1h-1zM534 325h1v1h-1zM552 326h1v1h-1zM412 308h1v1h-1zM413 379h1v1h-1zM514 385h1v1h-1zM511 321h1v1h-1zM494 277h1v1h-1zM430 360h1v1h-1zM525 307h1v1h-1zM475 336h1v1h-1zM488 333h1v1h-1zM401 292h1v1h-1zM550 297h1v1h-1zM465 302h1v1h-1zM462 360h1v1h-1zM452 303h1v1h-1zM529 273h1v1h-1zM535 323h1v1h-1zM396 303h1v1h-1zM536 336h1v1h-1zM562 370h1v1h-1zM536 283h1v1h-1zM555 378h1v1h-1zM539 386h1v1h-1zM572 374h1v1h-1zM481 306h1v1h-1zM484 286h1v1h-1zM400 313h1v1h-1zM579 299h1v1h-1zM574 323h1v1h-1zM571 293h1v1h-1zM445 378h1v1h-1zM437 293h1v1h-1zM481 352h1v1h-1zM572 335h1v1h-1zM540 310h1v1h-1zM490 326h1v1h-1zM469 319h1v1h-1zM587 358h1v1h-1zM532 336h1v1h-1zM456 355h1v1h-1zM459 319h1v1h-1zM479 363h1v1h-1zM441 338h1v1h-1zM584 289h1v1h-1zM412 281h1v1h-1zM422 386h1v1h-1zM576 312h1v1h-1zM424 381h1v1h-1zM511 338h1v1h-1zM593 359h1v1h-1zM519 278h1v1h-1zM437 352h1v1h-1zM501 384h1v1h-1zM519 279h1v1h-1zM484 305h1v1h-1zM497 337h1v1h-1zM585 374h1v1h-1zM573 323h1v1h-1zM460 364h1v1h-1zM558 305h1v1h-1zM490 364h1v1h-1zM570 314h1v1h-1zM442 315h1v1h-1zM590 299h1v1h-1zM540 379h1v1h-1zM429 345h1v1h-1zM503 355h1v1h-1zM576 289h1v1h-1zM555 367h1v1h-1zM464 375h1v1h-1zM437 289h1v1h-1zM447 321h1v1h-1zM555 358h1v1h-1zM470 302h1v1h-1zM562 296h1v1h-1zM399 333h1v1h-1zM545 361h1v1h-1zM598 290h1v1h-1zM464 361h1v1h-1zM465 326h1v1h-1zM460 353h1v1h-1zM566 323h1v1h-1zM494 359h1v1h-1zM431 279h1v1h-1zM436 364h1v1h-1zM426 384h1v1h-1zM406 297h1v1h-1zM469 318h1v1h-1zM583 341h1v1h-1zM426 324h1v1h-1zM480 388h1v1h-1zM402 379h1v1h-1zM534 382h1v1h-1zM519 294h1v1h-1zM491 281h1v1h-1zM475 329h1v1h-1zM562 309h1v1h-1zM453 323h1v1h-1zM580 352h1v1h-1zM500 370h1v1h-1zM432 346h1v1h-1zM495 359h1v1h-1zM573 300h1v1h-1zM535 309h1v1h-1zM433 329h1v1h-1zM440 379h1v1h-1zM423 344h1v1h-1zM460 385h1v1h-1zM520 328h1v1h-1zM426 292h1v1h-1zM478 386h1v1h-1zM400 307h1v1h-1zM540 345h1v1h-1zM432 308h1v1h-1zM556 324h1v1h-1zM466 314h1v1h-1zM454 283h1v1h-1zM519 298h1v1h-1zM489 343h1v1h-1zM462 344h1v1h-1zM409 292h1v1h-1zM412 273h1v1h-1zM590 312h1v1h-1zM567 283h1v1h-1zM397 296h1v1h-1zM482 334h1v1h-1zM431 373h1v1h-1zM447 384h1v1h-1zM500 334h1v1h-1zM404 326h1v1h-1zM485 376h1v1h-1zM539 323h1v1h-1zM538 280h1v1h-1zM451 343h1v1h-1zM553 357h1v1h-1zM555 305h1v1h-1zM466 297h1v1h-1zM470 383h1v1h-1zM459 376h1v1h-1zM509 346h1v1h-1zM581 279h1v1h-1zM441 382h1v1h-1zM402 294h1v1h-1zM533 288h1v1h-1zM568 282h1v1h-1zM465 318h1v1h-1zM402 369h1v1h-1zM538 312h1v1h-1zM412 338h1v1h-1zM515 274h1v1h-1zM449 281h1v1h-1zM489 274h1v1h-1zM592 340h1v1h-1zM463 376h1v1h-1zM458 374h1v1h-1zM584 336h1v1h-1zM498 312h1v1h-1zM532 378h1v1h-1zM566 371h1v1h-1zM592 285h1v1h-1zM519 324h1v1h-1zM576 325h1v1h-1zM460 388h1v1h-1zM555 276h1v1h-1zM398 346h1v1h-1zM432 302h1v1h-1zM478 322h1v1h-1zM581 320h1v1h-1zM525 357h1v1h-1zM466 376h1v1h-1zM489 353h1v1h-1zM559 330h1v1h-1zM486 312h1v1h-1zM467 281h1v1h-1zM563 314h1v1h-1zM548 285h1v1h-1zM463 315h1v1h-1zM450 367h1v1h-1zM442 300h1v1h-1zM408 368h1v1h-1zM429 342h1v1h-1zM473 360h1v1h-1zM448 295h1v1h-1zM484 286h1v1h-1zM435 291h1v1h-1zM491 317h1v1h-1zM442 328h1v1h-1zM401 274h1v1h-1zM498 337h1v1h-1zM409 324h1v1h-1zM420 314h1v1h-1zM533 380h1v1h-1zM590 299h1v1h-1zM401 385h1v1h-1zM440 314h1v1h-1zM413 369h1v1h-1zM546 286h1v1h-1zM544 314h1v1h-1zM506 333h1v1h-1zM452 336h1v1h-1zM500 372h1v1h-1zM576 386h1v1h-1zM441 377h1v1h-1zM465 281h1v1h-1zM569 322h1v1h-1zM478 385h1v1h-1zM442 372h1v1h-1zM487 340h1v1h-1zM398 291h1v1h-1zM582 354h1v1h-1zM565 321h1v1h-1zM560 280h1v1h-1zM450 351h1v1h-1zM553 317h1v1h-1zM508 382h1v1h-1zM578 353h1v1h-1zM504 337h1v1h-1zM541 287h1v1h-1zM427 380h1v1h-1zM585 361h1v1h-1zM586 331h1v1h-1zM507 358h1v1h-1zM515 326h1v1h-1zM494 337h1v1h-1zM454 321h1v1h-1zM549 342h1v1h-1zM542 278h1v1h-1zM527 277h1v1h-1zM531 353h1v1h-1zM511 330h1v1h-1zM468 348h1v1h-1zM407 349h1v1h-1zM409 314h1v1h-1zM434 341h1v1h-1zM515 315h1v1h-1zM461 367h1v1h-1zM555 313h1v1h-1zM444 367h1v1h-1zM516 343h1v1h-1zM498 279h1v1h-1zM428 369h1v1h-1zM521 287h1v1h-1zM455 296h1v1h-1zM562 374h1v1h-1zM432 379h1v1h-1zM425 375h1v1h-1zM422 338h1v1h-1zM460 306h1v1h-1zM412 296h1v1h-1zM405 364h1v1h-1zM483 305h1v1h-1zM528 376h1v1h-1zM485 331h1v1h-1zM449 341h1v1h-1zM399 383h1v1h-1zM505 298h1v1h-1zM521 308h1v1h-1zM560 303h1v1h-1zM414 286h1v1h-1zM538 329h1v1h-1zM597 369h1v1h-1zM521 385h1v1h-1zM457 282h1v1h-1zM523 382h1v1h-1zM410 371h1v1h-1zM536 388h1v1h-1zM412 374h1v1h-1zM434 376h1v1h-1zM489 295h1v1h-1zM421 315h1v1h-1zM405 317h1v1h-1zM452 379h1v1h-1zM469 288h1v1h-1zM502 296h1v1h-1zM553 322h1v1h-1zM403 381h1v1h-1zM570 351h1v1h-1zM515 388h1v1h-1zM521 282h1v1h-1zM418 356h1v1h-1zM448 341h1v1h-1zM557 313h1v1h-1zM582 298h1v1h-1zM539 358h1v1h-1zM506 321h1v1h-1zM399 377h1v1h-1zM482 362h1v1h-1zM476 381h1v1h-1zM557 308h1v1h-1zM564 350h1v1h-1zM449 361h1v1h-1zM449 296h1v1h-1zM592 289h1v1h-1zM439 361h1v1h-1zM544 332h1v1h-1zM406 289h1v1h-1zM467 287h1v1h-1zM462 317h1v1h-1zM552 352h1v1h-1zM487 312h1v1h-1zM446 274h1v1h-1zM413 361h1v1h-1zM448 367h1v1h-1zM579 319h1v1h-1zM475 371h1v1h-1zM500 298h1v1h-1zM433 282h1v1h-1zM557 307h1v1h-1zM504 320h1v1h-1zM552 325h1v1h-1zM467 331h1v1h-1zM430 337h1v1h-1zM427 285h1v1h-1zM484 338h1v1h-1zM576 326h1v1h-1zM456 336h1v1h-1zM544 288h1v1h-1zM468 288h1v1h-1zM469 382h1v1h-1zM416 359h1v1h-1zM561 331h1v1h-1zM453 334h1v1h-1zM495 298h1v1h-1zM586 325h1v1h-1zM549 301h1v1h-1zM510 354h1v1h-1zM412 319h1v1h-1zM503 315h1v1h-1zM468 347h1v1h-1zM508 357h1v1h-1zM464 310h1v1h-1zM565 361h1v1h-1zM399 359h1v1h-1zM552 304h1v1h-1zM399 325h1v1h-1zM491 289h1v1h-1zM547 387h1v1h-1zM460 322h1v1h-1zM503 308h1v1h-1zM483 286h1v1h-1zM592 348h1v1h-1zM422 342h1v1h-1zM564 285h1v1h-1zM512 387h1v1h-1zM449 284h1v1h-1zM598 319h1v1h-1zM400 320h1v1h-1zM403 365h1v1h-1zM547 358h1v1h-1zM574 317h1v1h-1zM401 358h1v1h-1zM558 292h1v1h-1zM516 282h1v1h-1zM488 294h1v1h-1zM514 337h1v1h-1zM476 334h1v1h-1zM567 356h1v1h-1zM551 280h1v1h-1zM452 275h1v1h-1zM598 323h1v1h-1zM506 379h1v1h-1zM454 356h1v1h-1zM534 362h1v1h-1zM424 280h1v1h-1zM413 332h1v1h-1zM563 324h1v1h-1zM598 356h1v1h-1zM451 339h1v1h-1zM545 299h1v1h-1zM523 320h1v1h-1zM432 338h1v1h-1zM497 285h1v1h-1zM585 374h1v1h-1zM417 273h1v1h-1zM438 356h1v1h-1zM574 352h1v1h-1zM597 367h1v1h-1zM460 357h1v1h-1zM583 333h1v1h-1zM594 386h1v1h-1zM426 328h1v1h-1zM515 292h1v1h-1zM400 320h1v1h-1zM489 379h1v1h-1zM402 286h1v1h-1zM485 325h1v1h-1zM533 344h1v1h-1zM532 287h1v1h-1zM594 374h1v1h-1zM420 311h1v1h-1zM525 345h1v1h-1zM427 281h1v1h-1zM541 303h1v1h-1zM429 357h1v1h-1zM418 338h1v1h-1zM527 312h1v1h-1zM471 318h1v1h-1zM595 304h1v1h-1zM459 348h1v1h-1zM501 332h1v1h-1zM409 300h1v1h-1zM546 330h1v1h-1zM439 344h1v1h-1zM422 331h1v1h-1zM431 381h1v1h-1zM422 376h1v1h-1zM524 292h1v1h-1zM432 345h1v1h-1zM530 295h1v1h-1zM500 352h1v1h-1zM552 383h1v1h-1zM578 288h1v1h-1zM501 378h1v1h-1zM398 302h1v1h-1zM435 375h1v1h-1zM424 367h1v1h-1zM584 364h1v1h-1zM492 293h1v1h-1zM471 340h1v1h-1zM554 276h1v1h-1zM499 287h1v1h-1zM522 311h1v1h-1zM535 355h1v1h-1zM591 381h1v1h-1zM594 278h1v1h-1zM495 326h1v1h-1zM472 283h1v1h-1zM450 306h1v1h-1zM533 287h1v1h-1zM564 326h1v1h-1zM480 387h1v1h-1zM521 299h1v1h-1zM563 386h1v1h-1zM539 290h1v1h-1zM541 337h1v1h-1zM420 323h1v1h-1zM556 311h1v1h-1zM464 367h1v1h-1zM549 306h1v1h-1zM452 320h1v1h-1zM417 327h1v1h-1zM598 334h1v1h-1zM494 318h1v1h-1zM562 328h1v1h-1zM481 330h1v1h-1zM425 279h1v1h-1zM475 379h1v1h-1zM531 280h1v1h-1zM437 340h1v1h-1zM493 343h1v1h-1zM478 324h1v1h-1zM453 359h1v1h-1zM421 364h1v1h-1zM491 277h1v1h-1zM476 319h1v1h-1zM519 302h1v1h-1zM529 368h1v1h-1zM530 335h1v1h-1zM583 274h1v1h-1zM491 325h1v1h-1zM547 286h1v1h-1zM397 361h1v1h-1zM547 318h1v1h-1zM459 319h1v1h-1zM549 361h1v1h-1zM490 380h1v1h-1zM473 299h1v1h-1zM551 370h1v1h-1zM546 280h1v1h-1zM476 296h1v1h-1zM523 288h1v1h-1zM528 370h1v1h-1zM588 317h1v1h-1zM409 382h1v1h-1zM419 300h1v1h-1zM460 348h1v1h-1zM465 376h1v1h-1zM599 327h1v1h-1zM561 383h1v1h-1zM491 324h1v1h-1zM418 309h1v1h-1zM542 360h1v1h-1zM420 283h1v1h-1zM497 301h1v1h-1zM460 315h1v1h-1zM404 313h1v1h-1zM434 377h1v1h-1zM435 373h1v1h-1zM469 355h1v1h-1zM468 280h1v1h-1zM591 335h1v1h-1zM408 323h1v1h-1zM555 283h1v1h-1zM537 290h1v1h-1zM483 354h1v1h-1zM579 275h1v1h-1zM553 360h1v1h-1zM588 300h1v1h-1zM544 342h1v1h-1zM397 378h1v1h-1zM584 334h1v1h-1zM503 315h1v1h-1zM569 353h1v1h-1zM415 295h1v1h-1zM596 283h1v1h-1zM508 360h1v1h-1zM588 290h1v1h-1zM492 369h1v1h-1zM510 359h1v1h-1zM507 375h1v1h-1zM426 329h1v1h-1zM477 387h1v1h-1zM584 366h1v1h-1zM414 379h1v1h-1zM425 379h1v1h-1zM487 358h1v1h-1zM536 364h1v1h-1zM424 362h1v1h-1zM426 323h1v1h-1zM475 361h1v1h-1zM563 344h1v1h-1zM425 384h1v1h-1zM450 285h1v1h-1zM502 314h1v1h-1zM533 290h1v1h-1zM427 292h1v1h-1zM466 333h1v1h-1zM500 277h1v1h-1zM506 321h1v1h-1zM447 359h1v1h-1zM575 336h1v1h-1zM522 328h1v1h-1zM572 375h1v1h-1zM495 338h1v1h-1zM595 334h1v1h-1zM422 343h1v1h-1zM586 382h1v1h-1zM438 371h1v1h-1zM545 314h1v1h-1zM447 274h1v1h-1zM484 378h1v1h-1zM437 356h1v1h-1zM485 321h1v1h-1zM547 375h1v1h-1zM529 360h1v1h-1zM495 330h1v1h-1zM543 348h1v1h-1zM514 318h1v1h-1zM593 347h1v1h-1zM433 334h1v1h-1zM576 323h1v1h-1zM479 284h1v1h-1zM574 335h1v1h-1zM455 353h1v1h-1zM462 317h1v1h-1zM582 325h1v1h-1zM543 278h1v1h-1zM461 281h1v1h-1zM461 321h1v1h-1zM458 364h1v1h-1zM450 328h1v1h-1zM554 281h1v1h-1zM539 296h1v1h-1zM501 389h1v1h-1zM531 331h1v1h-1zM495 335h1v1h-1zM426 302h1v1h-1zM443 369h1v1h-1zM554 286h1v1h-1zM569 312h1v1h-1zM524 381h1v1h-1zM434 277h1v1h-1zM574 318h1v1h-1zM541 293h1v1h-1zM537 335h1v1h-1zM481 335h1v1h-1zM434 330h1v1h-1zM591 318h1v1h-1zM473 285h1v1h-1zM459 373h1v1h-1zM435 300h1v1h-1zM447 383h1v1h-1zM532 367h1v1h-1zM552 317h1v1h-1zM426 293h1v1h-1zM591 297h1v1h-1zM545 294h1v1h-1zM490 361h1v1h-1zM479 319h1v1h-1zM423 373h1v1h-1zM579 376h1v1h-1zM470 350h1v1h-1zM582 306h1v1h-1zM424 304h1v1h-1zM487 275h1v1h-1zM440 341h1v1h-1zM460 358h1v1h-1zM471 309h1v1h-1zM460 344h1v1h-1zM429 306h1v1h-1zM520 282h1v1h-1zM465 276h1v1h-1zM468 374h1v1h-1zM467 338h1v1h-1zM434 384h1v1h-1zM495 293h1v1h-1zM535 382h1v1h-1zM429 351h1v1h-1zM418 342h1v1h-1zM583 293h1v1h-1zM532 369h1v1h-1zM564 362h1v1h-1zM546 372h1v1h-1zM559 306h1v1h-1zM474 279h1v1h-1zM505 372h1v1h-1zM488 356h1v1h-1zM597 342h1v1h-1zM455 334h1v1h-1zM511 360h1v1h-1zM490 317h1v1h-1zM582 300h1v1h-1zM559 337h1v1h-1zM465 345h1v1h-1zM582 317h1v1h-1zM455 282h1v1h-1zM536 287h1v1h-1zM543 357h1v1h-1zM586 282h1v1h-1zM473 388h1v1h-1zM396 286h1v1h-1zM540 288h1v1h-1zM445 320h1v1h-1zM475 318h1v1h-1zM432 280h1v1h-1zM566 358h1v1h-1zM413 291h1v1h-1zM403 325h1v1h-1zM542 291h1v1h-1zM571 382h1v1h-1zM596 339h1v1h-1zM534 282h1v1h-1zM507 340h1v1h-1zM569 296h1v1h-1zM418 340h1v1h-1zM573 318h1v1h-1zM552 336h1v1h-1zM446 385h1v1h-1zM576 286h1v1h-1zM502 290h1v1h-1zM520 297h1v1h-1zM416 361h1v1h-1zM520 276h1v1h-1zM538 388h1v1h-1zM539 284h1v1h-1zM430 388h1v1h-1zM472 305h1v1h-1zM481 301h1v1h-1zM575 307h1v1h-1zM434 342h1v1h-1zM435 382h1v1h-1zM505 374h1v1h-1zM401 350h1v1h-1zM521 374h1v1h-1zM547 360h1v1h-1zM542 351h1v1h-1zM552 313h1v1h-1zM439 284h1v1h-1zM592 339h1v1h-1zM436 389h1v1h-1zM404 286h1v1h-1zM424 311h1v1h-1zM473 276h1v1h-1zM502 277h1v1h-1zM434 379h1v1h-1zM443 361h1v1h-1zM550 339h1v1h-1zM544 371h1v1h-1zM589 358h1v1h-1zM417 273h1v1h-1zM491 281h1v1h-1zM599 300h1v1h-1zM497 379h1v1h-1zM455 325h1v1h-1zM485 315h1v1h-1zM452 317h1v1h-1zM496 274h1v1h-1zM593 303h1v1h-1zM463 279h1v1h-1zM545 320h1v1h-1zM530 365h1v1h-1zM481 339h1v1h-1zM568 318h1v1h-1zM512 356h1v1h-1zM456 385h1v1h-1zM502 295h1v1h-1zM447 292h1v1h-1zM450 305h1v1h-1zM511 334h1v1h-1zM452 373h1v1h-1zM481 296h1v1h-1zM456 359h1v1h-1zM563 351h1v1h-1zM462 349h1v1h-1zM529 346h1v1h-1zM461 346h1v1h-1zM401 296h1v1h-1zM475 302h1v1h-1zM412 311h1v1h-1zM526 315h1v1h-1zM585 365h1v1h-1zM448 359h1v1h-1zM404 374h1v1h-1zM459 342h1v1h-1zM419 283h1v1h-1zM571 370h1v1h-1zM524 304h1v1h-1zM509 300h1v1h-1zM407 326h1v1h-1zM538 290h1v1h-1zM490 358h1v1h-1zM487 281h1v1h-1zM414 379h1v1h-1zM495 290h1v1h-1zM503 374h1v1h-1zM567 373h1v1h-1zM455 316h1v1h-1zM598 299h1v1h-1zM493 389h1v1h-1zM469 344h1v1h-1zM547 367h1v1h-1zM413 333h1v1h-1zM399 279h1v1h-1zM523 277h1v1h-1zM493 281h1v1h-1zM504 293h1v1h-1zM432 281h1v1h-1zM448 293h1v1h-1zM522 301h1v1h-1zM477 316h1v1h-1zM431 290h1v1h-1zM432 375h1v1h-1zM578 313h1v1h-1zM406 297h1v1h-1zM456 290h1v1h-1zM575 359h1v1h-1zM456 385h1v1h-1zM581 386h1v1h-1zM567 331h1v1h-1zM490 320h1v1h-1zM582 288h1v1h-1zM465 291h1v1h-1zM414 296h1v1h-1zM581 317h1v1h-1zM569 279h1v1h-1zM427 312h1v1h-1zM478 296h1v1h-1zM545 288h1v1h-1zM466 340h1v1h-1zM529 342h1v1h-1zM541 329h1v1h-1zM591 375h1v1h-1zM530 306h1v1h-1zM419 283h1v1h-1zM563 301h1v1h-1zM400 282h1v1h-1zM475 370h1v1h-1zM569 337h1v1h-1zM443 293h1v1h-1zM480 354h1v1h-1zM541 286h1v1h-1zM471 334h1v1h-1zM598 387h1v1h-1zM549 331h1v1h-1zM485 350h1v1h-1zM521 332h1v1h-1zM405 297h1v1h-1zM433 333h1v1h-1zM569 276h1v1h-1zM508 370h1v1h-1zM545 324h1v1h-1zM535 279h1v1h-1zM468 293h1v1h-1zM407 295h1v1h-1zM498 367h1v1h-1zM450 275h1v1h-1zM402 301h1v1h-1zM504 375h1v1h-1zM523 351h1v1h-1zM563 281h1v1h-1zM515 276h1v1h-1zM442 316h1v1h-1zM399 294h1v1h-1zM473 278h1v1h-1zM482 306h1v1h-1zM554 344h1v1h-1zM490 361h1v1h-1zM517 305h1v1h-1zM555 368h1v1h-1zM477 294h1v1h-1zM487 291h1v1h-1zM544 347h1v1h-1zM552 326h1v1h-1zM505 342h1v1h-1zM546 331h1v1h-1zM461 315h1v1h-1zM521 302h1v1h-1zM569 352h1v1h-1zM564 293h1v1h-1zM515 338h1v1h-1zM539 309h1v1h-1zM591 294h1v1h-1zM581 313h1v1h-1zM456 344h1v1h-1zM545 324h1v1h-1zM436 362h1v1h-1zM482 309h1v1h-1zM559 285h1v1h-1zM558 360h1v1h-1zM396 317h1v1h-1zM518 344h1v1h-1zM424 336h1v1h-1zM586 375h1v1h-1zM527 356h1v1h-1zM493 360h1v1h-1zM396 357h1v1h-1zM523 324h1v1h-1zM464 336h1v1h-1zM542 381h1v1h-1zM557 345h1v1h-1zM514 280h1v1h-1zM419 313h1v1h-1zM523 354h1v1h-1zM519 280h1v1h-1zM560 291h1v1h-1zM402 308h1v1h-1zM533 329h1v1h-1zM408 283h1v1h-1zM467 375h1v1h-1zM408 303h1v1h-1zM545 379h1v1h-1zM498 375h1v1h-1zM406 305h1v1h-1zM445 388h1v1h-1zM558 337h1v1h-1zM422 327h1v1h-1zM486 344h1v1h-1zM410 282h1v1h-1zM521 382h1v1h-1zM519 292h1v1h-1zM470 313h1v1h-1zM566 337h1v1h-1zM524 316h1v1h-1zM446 355h1v1h-1zM451 361h1v1h-1zM510 375h1v1h-1zM472 358h1v1h-1zM428 360h1v1h-1zM459 375h1v1h-1zM582 364h1v1h-1zM466 376h1v1h-1zM472 375h1v1h-1zM441 288h1v1h-1zM517 311h1v1h-1zM578 304h1v1h-1zM407 376h1v1h-1zM401 338h1v1h-1zM564 316h1v1h-1zM516 374h1v1h-1zM560 351h1v1h-1zM568 389h1v1h-1zM498 355h1v1h-1zM412 358h1v1h-1zM436 287h1v1h-1zM462 309h1v1h-1zM495 312h1v1h-1zM461 296h1v1h-1zM552 361h1v1h-1zM594 370h1v1h-1zM462 363h1v1h-1zM555 356h1v1h-1zM428 368h1v1h-1zM582 358h1v1h-1zM410 328h1v1h-1zM500 371h1v1h-1zM496 373h1v1h-1zM588 384h1v1h-1zM396 345h1v1h-1zM463 336h1v1h-1zM559 335h1v1h-1zM453 322h1v1h-1zM578 318h1v1h-1zM406 275h1v1h-1zM437 336h1v1h-1zM599 302h1v1h-1zM455 356h1v1h-1zM554 372h1v1h-1zM426 361h1v1h-1zM435 339h1v1h-1zM506 313h1v1h-1zM515 307h1v1h-1zM572 296h1v1h-1zM402 355h1v1h-1zM464 360h1v1h-1zM593 286h1v1h-1zM480 315h1v1h-1zM409 389h1v1h-1zM402 310h1v1h-1zM532 347h1v1h-1zM554 311h1v1h-1zM514 372h1v1h-1zM410 315h1v1h-1zM423 308h1v1h-1zM451 339h1v1h-1zM520 281h1v1h-1zM405 285h1v1h-1zM576 341h1v1h-1zM408 333h1v1h-1zM589 368h1v1h-1zM530 304h1v1h-1zM469 298h1v1h-1zM544 319h1v1h-1zM457 328h1v1h-1zM479 323h1v1h-1zM413 316h1v1h-1zM409 318h1v1h-1zM471 340h1v1h-1zM559 341h1v1h-1zM502 300h1v1h-1zM500 303h1v1h-1zM598 333h1v1h-1zM416 288h1v1h-1zM505 328h1v1h-1zM517 360h1v1h-1zM502 370h1v1h-1zM557 344h1v1h-1zM560 337h1v1h-1zM460 348h1v1h-1zM534 326h1v1h-1zM399 340h1v1h-1zM418 297h1v1h-1zM442 371h1v1h-1zM410 351h1v1h-1zM434 296h1v1h-1zM537 307h1v1h-1zM597 365h1v1h-1zM545 366h1v1h-1zM477 307h1v1h-1zM592 375h1v1h-1zM561 278h1v1h-1zM576 280h1v1h-1zM512 280h1v1h-1zM506 286h1v1h-1zM517 297h1v1h-1zM460 386h1v1h-1zM410 343h1v1h-1zM414 273h1v1h-1zM464 332h1v1h-1zM573 351h1v1h-1zM508 384h1v1h-1zM428 327h1v1h-1zM523 346h1v1h-1zM596 368h1v1h-1zM458 324h1v1h-1zM562 303h1v1h-1zM570 383h1v1h-1zM553 325h1v1h-1zM407 284h1v1h-1zM577 345h1v1h-1zM428 304h1v1h-1zM410 346h1v1h-1zM517 324h1v1h-1zM400 322h1v1h-1zM414 368h1v1h-1zM496 366h1v1h-1zM515 352h1v1h-1zM423 299h1v1h-1zM458 382h1v1h-1zM585 335h1v1h-1zM546 384h1v1h-1zM476 354h1v1h-1zM426 315h1v1h-1zM473 275h1v1h-1zM452 379h1v1h-1zM580 338h1v1h-1zM543 325h1v1h-1zM585 324h1v1h-1zM445 305h1v1h-1zM404 374h1v1h-1zM419 363h1v1h-1zM464 330h1v1h-1zM449 319h1v1h-1zM565 328h1v1h-1zM448 330h1v1h-1zM507 313h1v1h-1zM450 352h1v1h-1zM401 325h1v1h-1zM473 352h1v1h-1zM593 284h1v1h-1zM512 367h1v1h-1zM517 353h1v1h-1zM536 331h1v1h-1zM564 321h1v1h-1zM569 387h1v1h-1zM525 375h1v1h-1zM597 324h1v1h-1zM567 282h1v1h-1zM585 302h1v1h-1zM471 302h1v1h-1zM581 350h1v1h-1zM549 356h1v1h-1zM567 331h1v1h-1zM507 300h1v1h-1zM563 311h1v1h-1zM453 349h1v1h-1zM593 283h1v1h-1zM534 348h1v1h-1zM582 316h1v1h-1zM540 364h1v1h-1zM496 275h1v1h-1zM502 317h1v1h-1zM592 327h1v1h-1zM462 284h1v1h-1zM553 321h1v1h-1zM452 383h1v1h-1zM497 311h1v1h-1zM446 368h1v1h-1zM507 280h1v1h-1zM523 347h1v1h-1zM409 378h1v1h-1zM451 380h1v1h-1zM562 323h1v1h-1zM413 348h1v1h-1zM578 364h1v1h-1zM590 316h1v1h-1zM587 319h1v1h-1zM544 334h1v1h-1zM460 305h1v1h-1zM576 360h1v1h-1zM539 325h1v1h-1zM535 293h1v1h-1zM402 290h1v1h-1zM588 372h1v1h-1zM545 314h1v1h-1zM582 338h1v1h-1zM401 308h1v1h-1zM589 345h1v1h-1zM483 340h1v1h-1zM522 314h1v1h-1zM438 353h1v1h-1zM599 387h1v1h-1zM522 357h1v1h-1zM520 310h1v1h-1zM503 359h1v1h-1zM433 285h1v1h-1zM551 279h1v1h-1zM513 332h1v1h-1zM531 344h1v1h-1zM508 345h1v1h-1zM401 310h1v1h-1zM486 328h1v1h-1zM590 279h1v1h-1zM415 274h1v1h-1zM472 342h1v1h-1zM573 294h1v1h-1zM572 319h1v1h-1zM451 321h1v1h-1zM576 308h1v1h-1zM433 318h1v1h-1zM544 341h1v1h-1zM527 276h1v1h-1zM534 320h1v1h-1zM497 357h1v1h-1zM499 292h1v1h-1zM597 312h1v1h-1zM556 384h1v1h-1zM552 304h1v1h-1zM448 295h1v1h-1zM402 288h1v1h-1zM417 354h1v1h-1zM599 276h1v1h-1zM585 297h1v1h-1zM463 275h1v1h-1zM521 280h1v1h-1zM574 347h1v1h-1zM403 358h1v1h-1zM470 383h1v1h-1zM480 300h1v1h-1zM555 363h1v1h-1zM488 362h1v1h-1zM478 316h1v1h-1zM451 381h1v1h-1zM517 362h1v1h-1zM476 276h1v1h-1zM509 376h1v1h-1zM597 345h1v1h-1zM468 350h1v1h-1zM525 318h1v1h-1zM453 343h1v1h-1zM453 350h1v1h-1zM554 313h1v1h-1zM434 355h1v1h-1zM483 373h1v1h-1zM508 386h1v1h-1zM506 295h1v1h-1zM442 348h1v1h-1zM569 370h1v1h-1zM439 333h1v1h-1zM486 350h1v1h-1zM576 317h1v1h-1zM451 371h1v1h-1zM477 384h1v1h-1zM453 334h1v1h-1zM489 280h1v1h-1zM454 336h1v1h-1zM579 358h1v1h-1zM408 381h1v1h-1zM574 368h1v1h-1zM412 371h1v1h-1zM570 342h1v1h-1zM545 276h1v1h-1zM420 314h1v1h-1zM407 348h1v1h-1zM486 370h1v1h-1zM521 349h1v1h-1zM532 383h1v1h-1zM494 281h1v1h-1zM599 286h1v1h-1zM502 275h1v1h-1zM574 351h1v1h-1zM441 343h1v1h-1zM465 278h1v1h-1zM566 292h1v1h-1zM574 359h1v1h-1zM478 279h1v1h-1zM515 372h1v1h-1zM469 301h1v1h-1zM539 275h1v1h-1zM487 304h1v1h-1zM488 273h1v1h-1zM459 310h1v1h-1zM472 306h1v1h-1zM399 275h1v1h-1zM489 312h1v1h-1zM502 348h1v1h-1zM440 307h1v1h-1zM440 287h1v1h-1zM437 381h1v1h-1zM420 333h1v1h-1zM569 338h1v1h-1zM444 312h1v1h-1zM535 386h1v1h-1zM589 384h1v1h-1zM555 375h1v1h-1zM564 329h1v1h-1zM573 364h1v1h-1zM524 304h1v1h-1zM501 377h1v1h-1zM495 319h1v1h-1zM525 306h1v1h-1zM515 329h1v1h-1zM531 346h1v1h-1zM532 373h1v1h-1zM453 309h1v1h-1zM401 310h1v1h-1zM473 323h1v1h-1zM404 355h1v1h-1zM599 278h1v1h-1zM554 331h1v1h-1zM469 339h1v1h-1zM444 320h1v1h-1zM538 360h1v1h-1zM514 361h1v1h-1zM491 368h1v1h-1zM512 284h1v1h-1zM497 337h1v1h-1zM537 302h1v1h-1zM544 356h1v1h-1zM445 282h1v1h-1zM424 304h1v1h-1zM532 315h1v1h-1zM535 327h1v1h-1zM527 344h1v1h-1zM475 277h1v1h-1zM470 339h1v1h-1zM487 282h1v1h-1zM532 287h1v1h-1zM399 383h1v1h-1zM433 375h1v1h-1zM495 364h1v1h-1zM559 369h1v1h-1zM424 330h1v1h-1zM539 387h1v1h-1zM507 348h1v1h-1zM591 342h1v1h-1zM547 280h1v1h-1zM545 363h1v1h-1zM440 281h1v1h-1zM514 368h1v1h-1zM458 359h1v1h-1zM523 300h1v1h-1zM510 356h1v1h-1zM535 376h1v1h-1zM482 346h1v1h-1zM557 351h1v1h-1zM400 274h1v1h-1zM452 365h1v1h-1zM564 300h1v1h-1zM550 282h1v1h-1zM458 370h1v1h-1zM475 315h1v1h-1zM441 387h1v1h-1zM539 339h1v1h-1zM421 354h1v1h-1zM443 306h1v1h-1zM444 377h1v1h-1zM599 365h1v1h-1zM453 370h1v1h-1zM438 280h1v1h-1zM484 277h1v1h-1zM581 375h1v1h-1zM579 290h1v1h-1zM598 298h1v1h-1zM558 276h1v1h-1zM585 293h1v1h-1zM517 355h1v1h-1zM478 376h1v1h-1zM462 388h1v1h-1zM585 296h1v1h-1zM477 354h1v1h-1zM425 351h1v1h-1zM397 360h1v1h-1zM407 383h1v1h-1zM540 311h1v1h-1zM494 385h1v1h-1zM564 305h1v1h-1zM495 364h1v1h-1zM561 296h1v1h-1zM502 336h1v1h-1zM563 277h1v1h-1zM457 348h1v1h-1zM467 307h1v1h-1zM447 359h1v1h-1zM417 281h1v1h-1zM460 296h1v1h-1zM573 303h1v1h-1zM493 310h1v1h-1zM566 362h1v1h-1zM426 354h1v1h-1zM567 356h1v1h-1zM556 361h1v1h-1zM494 364h1v1h-1zM477 336h1v1h-1zM397 280h1v1h-1zM501 335h1v1h-1zM546 322h1v1h-1zM427 340h1v1h-1zM460 279h1v1h-1zM425 276h1v1h-1zM488 350h1v1h-1zM491 344h1v1h-1zM480 322h1v1h-1zM433 348h1v1h-1zM560 350h1v1h-1zM442 299h1v1h-1zM524 274h1v1h-1zM523 357h1v1h-1zM592 355h1v1h-1zM540 353h1v1h-1zM457 330h1v1h-1zM444 335h1v1h-1zM581 278h1v1h-1zM415 342h1v1h-1zM404 289h1v1h-1zM444 322h1v1h-1zM515 301h1v1h-1zM507 352h1v1h-1zM492 368h1v1h-1zM437 370h1v1h-1zM489 365h1v1h-1zM409 317h1v1h-1zM413 291h1v1h-1zM466 293h1v1h-1zM553 277h1v1h-1zM403 303h1v1h-1zM561 321h1v1h-1zM433 284h1v1h-1zM578 278h1v1h-1zM431 381h1v1h-1zM483 350h1v1h-1zM405 348h1v1h-1zM424 302h1v1h-1zM469 296h1v1h-1zM444 330h1v1h-1zM424 328h1v1h-1zM447 282h1v1h-1zM559 339h1v1h-1zM439 282h1v1h-1zM439 378h1v1h-1zM533 374h1v1h-1zM492 325h1v1h-1zM434 321h1v1h-1zM541 368h1v1h-1zM526 285h1v1h-1zM495 273h1v1h-1zM517 312h1v1h-1zM406 351h1v1h-1zM403 297h1v1h-1zM481 274h1v1h-1zM504 386h1v1h-1zM597 348h1v1h-1zM496 310h1v1h-1zM534 309h1v1h-1zM566 289h1v1h-1zM437 322h1v1h-1zM577 385h1v1h-1zM491 363h1v1h-1zM423 389h1v1h-1zM563 278h1v1h-1zM463 309h1v1h-1zM472 310h1v1h-1zM458 369h1v1h-1zM596 285h1v1h-1zM575 366h1v1h-1zM560 296h1v1h-1zM556 323h1v1h-1zM483 370h1v1h-1zM460 287h1v1h-1zM538 288h1v1h-1zM585 326h1v1h-1zM571 319h1v1h-1zM547 350h1v1h-1zM569 346h1v1h-1zM543 386h1v1h-1zM467 302h1v1h-1zM519 356h1v1h-1zM465 346h1v1h-1zM432 306h1v1h-1zM499 336h1v1h-1zM540 284h1v1h-1zM429 372h1v1h-1zM595 356h1v1h-1zM411 328h1v1h-1zM556 347h1v1h-1zM467 299h1v1h-1zM478 350h1v1h-1zM495 297h1v1h-1zM464 330h1v1h-1zM566 382h1v1h-1zM403 306h1v1h-1zM443 319h1v1h-1zM525 361h1v1h-1zM551 297h1v1h-1zM534 381h1v1h-1zM463 298h1v1h-1zM493 344h1v1h-1zM551 316h1v1h-1zM583 273h1v1h-1zM425 273h1v1h-1zM572 273h1v1h-1zM556 315h1v1h-1zM560 308h1v1h-1zM516 337h1v1h-1zM559 276h1v1h-1zM412 328h1v1h-1zM579 302h1v1h-1zM519 295h1v1h-1zM580 332h1v1h-1zM517 359h1v1h-1zM503 307h1v1h-1zM477 344h1v1h-1zM497 303h1v1h-1zM476 365h1v1h-1zM585 373h1v1h-1zM514 341h1v1h-1zM571 352h1v1h-1zM434 373h1v1h-1zM563 298h1v1h-1zM428 351h1v1h-1zM549 293h1v1h-1zM571 277h1v1h-1zM503 325h1v1h-1zM442 342h1v1h-1zM583 297h1v1h-1zM542 359h1v1h-1zM568 318h1v1h-1zM561 280h1v1h-1zM490 285h1v1h-1zM405 290h1v1h-1zM513 359h1v1h-1zM461 360h1v1h-1zM461 343h1v1h-1zM512 382h1v1h-1zM491 287h1v1h-1zM410 355h1v1h-1zM561 276h1v1h-1zM517 302h1v1h-1zM421 276h1v1h-1zM546 293h1v1h-1zM412 293h1v1h-1zM532 317h1v1h-1zM428 284h1v1h-1zM550 362h1v1h-1zM484 288h1v1h-1zM491 358h1v1h-1zM562 366h1v1h-1zM491 386h1v1h-1zM505 343h1v1h-1zM559 347h1v1h-1zM457 383h1v1h-1zM409 359h1v1h-1zM534 314h1v1h-1zM469 329h1v1h-1zM594 309h1v1h-1zM558 327h1v1h-1zM515 300h1v1h-1zM398 329h1v1h-1zM517 382h1v1h-1zM463 334h1v1h-1zM549 389h1v1h-1zM526 293h1v1h-1zM526 307h1v1h-1zM411 341h1v1h-1zM429 319h1v1h-1z" fill="#8c8c8c" opacity="0.75"/><path d="M445 301h2v1h-1zM529 339h1v1h-1zM554 377h1v1h-1zM510 347h2v1h-1zM542 360h2v1h-1zM472 318h1v1h-1zM522 382h1v1h-1zM591 353h1v1h-1zM528 357h1v1h-1zM575 342h1v1h-1zM589 383h2v1h-1zM583 342h2v1h-1zM433 319h2v1h-1zM509 374h1v1h-1zM493 348h1v1h-1zM526 377h1v1h-1zM545 336h2v1h-1zM430 341h1v1h-1zM498 354h1v1h-1zM503 318h2v1h-1zM467 335h2v1h-1zM557 344h2v1h-1zM451 369h2v1h-1zM554 348h1v1h-1zM489 339h2v1h-1zM444 386h1v1h-1zM549 326h1v1h-1zM528 358h2v1h-1zM452 368h1v1h-1zM446 329h1v1h-1zM578 366h1v1h-1zM563 341h1v1h-1zM559 375h1v1h-1zM478 327h1v1h-1zM453 323h2v1h-1zM504 346h2v1h-1zM574 345h1v1h-1zM556 347h1v1h-1zM525 380h1v1h-1zM450 319h1v1h-1zM518 335h2v1h-1zM454 304h1v1h-1zM574 362h2v1h-1zM575 327h1v1h-1zM501 354h1v1h-1zM544 375h2v1h-1zM463 332h1v1h-1zM516 325h1v1h-1zM437 306h1v1h-1zM572 347h2v1h-1zM547 362h1v1h-1zM583 381h1v1h-1zM460 311h1v1h-1zM511 372h1v1h-1zM559 350h1v1h-1zM544 320h1v1h-1zM490 328h1v1h-1zM439 332h1v1h-1zM445 370h1v1h-1zM442 333h2v1h-1zM595 361h1v1h-1zM455 318h1v1h-1zM431 325h2v1h-1zM506 375h2v1h-1zM542 383h1v1h-1zM550 341h1v1h-1zM495 349h1v1h-1zM525 361h1v1h-1zM473 356h1v1h-1zM466 386h1v1h-1zM549 324h1v1h-1zM470 328h1v1h-1zM588 347h2v1h-1zM465 357h1v1h-1zM545 343h1v1h-1zM489 361h1v1h-1zM590 346h1v1h-1zM514 328h2v1h-1zM444 323h2v1h-1zM545 370h1v1h-1zM542 319h1v1h-1zM537 352h1v1h-1zM469 303h1v1h-1zM576 337h1v1h-1zM472 333h1v1h-1zM457 340h1v1h-1zM469 365h1v1h-1zM591 385h1v1h-1zM573 361h1v1h-1zM460 332h1v1h-1zM523 355h1v1h-1zM491 330h1v1h-1zM529 337h1v1h-1zM471 307h2v1h-1zM505 318h2v1h-1zM434 356h2v1h-1zM517 365h1v1h-1zM564 336h1v1h-1zM522 355h1v1h-1zM534 327h1v1h-1zM465 323h2v1h-1zM488 322h1v1h-1zM452 377h2v1h-1zM556 335h1v1h-1zM482 317h2v1h-1zM579 339h1v1h-1zM432 308h2v1h-1zM563 352h2v1h-1zM444 366h1v1h-1zM515 336h2v1h-1zM433 352h1v1h-1zM464 385h1v1h-1zM493 323h2v1h-1zM471 389h1v1h-1zM577 376h1v1h-1zM521 366h1v1h-1zM460 345h2v1h-1zM492 341h2v1h-1zM527 373h1v1h-1zM504 313h2v1h-1zM556 357h2v1h-1zM436 367h2v1h-1zM464 302h1v1h-1zM452 328h2v1h-1zM476 321h1v1h-1zM509 332h2v1h-1zM437 302h1v1h-1zM479 333h1v1h-1zM583 381h2v1h-1zM548 366h1v1h-1zM475 305h1v1h-1zM461 359h1v1h-1zM579 364h1v1h-1zM458 315h1v1h-1zM533 317h2v1h-1zM581 329h1v1h-1zM467 385h2v1h-1zM548 350h1v1h-1zM434 381h1v1h-1zM537 376h2v1h-1zM522 343h1v1h-1zM491 342h2v1h-1zM541 372h1v1h-1zM532 371h1v1h-1zM513 366h1v1h-1zM520 331h1v1h-1zM599 380h1v1h-1zM447 341h1v1h-1zM481 364h2v1h-1zM435 328h1v1h-1zM537 350h1v1h-1zM440 304h2v1h-1zM588 334h2v1h-1zM589 334h2v1h-1zM494 315h2v1h-1zM433 355h1v1h-1zM440 336h1v1h-1zM508 344h2v1h-1zM472 315h1v1h-1zM582 365h1v1h-1zM451 359h2v1h-1zM505 352h2v1h-1zM503 335h1v1h-1zM452 369h1v1h-1zM546 378h2v1h-1zM575 328h2v1h-1zM528 325h2v1h-1zM523 358h2v1h-1zM507 378h1v1h-1zM550 339h1v1h-1zM492 342h1v1h-1zM478 365h2v1h-1zM528 374h1v1h-1zM433 345h1v1h-1zM491 341h2v1h-1zM513 362h1v1h-1zM502 327h1v1h-1zM444 302h1v1h-1zM585 344h1v1h-1zM562 349h1v1h-1zM520 313h2v1h-1zM487 386h2v1h-1zM469 353h1v1h-1zM520 317h2v1h-1zM481 378h2v1h-1zM500 366h1v1h-1zM551 334h2v1h-1zM431 352h2v1h-1zM557 350h2v1h-1zM468 353h1v1h-1zM589 377h1v1h-1zM527 357h2v1h-1zM547 336h2v1h-1zM520 337h1v1h-1zM530 367h2v1h-1zM582 349h2v1h-1zM557 348h1v1h-1zM506 323h2v1h-1zM507 318h1v1h-1zM577 348h2v1h-1zM489 311h1v1h-1zM512 377h1v1h-1zM513 326h1v1h-1zM432 303h1v1h-1zM495 372h1v1h-1zM506 368h1v1h-1zM567 379h1v1h-1zM562 366h2v1h-1zM540 349h1v1h-1zM582 386h1v1h-1zM447 367h1v1h-1zM455 352h1v1h-1zM558 351h2v1h-1zM573 373h1v1h-1zM478 353h1v1h-1zM532 356h2v1h-1zM580 343h2v1h-1zM473 346h1v1h-1z" fill="#ff0000"/></g>
<path d="M443 284 L465 276 L479 279 L476 293 L446 292 Z" fill="#011a40"/>
<path d="M396 285.4 L442 283 L442 285 L400 287 Z" fill="#ff2020"/>
<path d="M442 285 Q460 275 482 269.5 L483 272 Q462 279 444 287 Z" fill="#ff0000"/>
<!-- red blob right -->
<path d="M563 387 L565 389.6 L581 369 L595.4 355.7 L600 353.3 L600 405 L590.5 405.4 L562.7 399.3 Z" fill="#e00010"/>
<ellipse cx="600" cy="408.5" rx="8" ry="3.5" fill="#ff0000" stroke="#fff" stroke-width="1.2"/>
<!-- fan light green -->
<path d="M302 257 L342 252 L342 253.5 L430 311 L510 360.5 L562.7 399.3 L446.7 376.7 L343.3 355 L295 345.6 L194.4 329.4 Z" fill="#2ef02e"/>
<path clip-path="url(#lgclip)" d="M505 331h1v1h-1zM544 297h1v1h-1zM343 294h1v1h-1zM428 362h1v1h-1zM453 338h1v1h-1zM338 335h1v1h-1zM545 346h1v1h-1zM398 372h1v1h-1zM440 394h1v1h-1zM377 295h1v1h-1zM255 290h1v1h-1zM554 336h1v1h-1zM468 295h1v1h-1zM542 304h1v1h-1zM422 304h1v1h-1zM486 339h1v1h-1zM245 362h1v1h-1zM312 382h1v1h-1zM270 341h1v1h-1zM527 322h1v1h-1zM354 332h1v1h-1zM391 398h1v1h-1zM304 378h1v1h-1zM200 285h1v1h-1zM281 346h1v1h-1zM267 301h1v1h-1zM278 302h1v1h-1zM253 398h1v1h-1zM227 357h1v1h-1zM540 304h1v1h-1zM304 327h1v1h-1zM423 308h1v1h-1zM504 291h1v1h-1zM339 291h1v1h-1zM366 375h1v1h-1zM268 339h1v1h-1zM233 298h1v1h-1zM478 289h1v1h-1zM528 327h1v1h-1zM435 336h1v1h-1zM300 391h1v1h-1zM218 362h1v1h-1zM286 345h1v1h-1zM448 323h1v1h-1zM352 338h1v1h-1zM301 384h1v1h-1zM524 294h1v1h-1zM409 305h1v1h-1zM429 364h1v1h-1zM287 326h1v1h-1zM225 377h1v1h-1zM408 400h1v1h-1zM215 389h1v1h-1zM453 315h1v1h-1zM266 393h1v1h-1zM474 350h1v1h-1zM474 395h1v1h-1zM340 316h1v1h-1zM282 355h1v1h-1zM459 325h1v1h-1zM281 361h1v1h-1zM329 382h1v1h-1zM319 328h1v1h-1zM540 338h1v1h-1zM551 378h1v1h-1zM309 344h1v1h-1zM227 300h1v1h-1zM455 297h1v1h-1zM313 306h1v1h-1zM319 390h1v1h-1zM410 348h1v1h-1zM524 347h1v1h-1zM381 310h1v1h-1zM383 294h1v1h-1zM285 313h1v1h-1zM505 362h1v1h-1zM321 301h1v1h-1zM241 374h1v1h-1zM453 361h1v1h-1zM460 363h1v1h-1zM506 386h1v1h-1zM416 337h1v1h-1zM316 367h1v1h-1zM386 337h1v1h-1zM382 300h1v1h-1zM526 317h1v1h-1zM375 344h1v1h-1zM375 356h1v1h-1zM332 387h1v1h-1zM547 371h1v1h-1zM273 392h1v1h-1zM342 334h1v1h-1zM543 367h1v1h-1zM217 317h1v1h-1zM391 325h1v1h-1zM486 297h1v1h-1zM283 323h1v1h-1zM497 333h1v1h-1zM520 299h1v1h-1zM553 303h1v1h-1zM521 352h1v1h-1zM517 295h1v1h-1zM468 317h1v1h-1zM445 313h1v1h-1zM243 397h1v1h-1zM229 330h1v1h-1zM553 345h1v1h-1zM298 387h1v1h-1zM343 339h1v1h-1zM337 324h1v1h-1zM440 288h1v1h-1zM302 366h1v1h-1zM486 387h1v1h-1zM361 348h1v1h-1zM293 286h1v1h-1zM256 338h1v1h-1zM234 295h1v1h-1zM503 355h1v1h-1zM202 315h1v1h-1zM427 344h1v1h-1zM501 347h1v1h-1zM358 325h1v1h-1zM212 351h1v1h-1zM410 341h1v1h-1zM376 318h1v1h-1zM263 331h1v1h-1zM513 381h1v1h-1zM545 358h1v1h-1zM258 301h1v1h-1zM369 388h1v1h-1zM517 296h1v1h-1zM285 356h1v1h-1zM530 297h1v1h-1zM452 296h1v1h-1zM286 337h1v1h-1zM510 305h1v1h-1zM348 325h1v1h-1zM490 322h1v1h-1zM345 295h1v1h-1zM427 367h1v1h-1zM213 345h1v1h-1zM262 384h1v1h-1zM355 370h1v1h-1zM256 305h1v1h-1zM460 352h1v1h-1zM406 388h1v1h-1zM458 380h1v1h-1zM560 399h1v1h-1zM547 362h1v1h-1zM486 390h1v1h-1zM422 296h1v1h-1zM269 380h1v1h-1zM219 395h1v1h-1zM277 384h1v1h-1zM353 299h1v1h-1zM419 302h1v1h-1zM433 306h1v1h-1zM483 358h1v1h-1zM338 365h1v1h-1zM507 327h1v1h-1zM248 393h1v1h-1zM366 387h1v1h-1zM409 285h1v1h-1zM447 355h1v1h-1zM388 296h1v1h-1zM303 293h1v1h-1zM373 319h1v1h-1zM526 383h1v1h-1zM536 360h1v1h-1zM536 308h1v1h-1zM406 327h1v1h-1zM461 368h1v1h-1zM299 339h1v1h-1zM431 290h1v1h-1zM326 292h1v1h-1zM540 344h1v1h-1zM249 355h1v1h-1zM265 361h1v1h-1zM296 357h1v1h-1zM467 354h1v1h-1zM492 347h1v1h-1zM196 312h1v1h-1zM528 333h1v1h-1zM515 305h1v1h-1zM438 390h1v1h-1zM533 341h1v1h-1zM286 374h1v1h-1zM448 359h1v1h-1zM301 367h1v1h-1zM256 331h1v1h-1zM279 339h1v1h-1zM313 400h1v1h-1zM241 285h1v1h-1zM437 392h1v1h-1zM260 330h1v1h-1zM241 315h1v1h-1zM340 367h1v1h-1zM470 384h1v1h-1zM373 340h1v1h-1zM428 288h1v1h-1zM434 384h1v1h-1zM384 386h1v1h-1zM428 349h1v1h-1zM545 376h1v1h-1zM362 357h1v1h-1zM552 303h1v1h-1zM273 290h1v1h-1zM464 334h1v1h-1zM483 330h1v1h-1zM211 355h1v1h-1zM235 399h1v1h-1zM412 370h1v1h-1zM309 392h1v1h-1zM374 288h1v1h-1zM236 325h1v1h-1zM309 332h1v1h-1zM253 324h1v1h-1zM265 292h1v1h-1zM497 372h1v1h-1zM511 333h1v1h-1zM367 307h1v1h-1zM289 298h1v1h-1zM369 286h1v1h-1zM422 382h1v1h-1zM313 308h1v1h-1zM237 310h1v1h-1zM291 333h1v1h-1zM356 345h1v1h-1zM241 379h1v1h-1zM350 290h1v1h-1zM426 347h1v1h-1zM376 296h1v1h-1zM436 297h1v1h-1zM329 388h1v1h-1zM227 323h1v1h-1zM502 328h1v1h-1zM466 297h1v1h-1zM282 394h1v1h-1zM363 310h1v1h-1zM309 300h1v1h-1zM429 323h1v1h-1zM421 294h1v1h-1zM495 372h1v1h-1zM358 311h1v1h-1zM239 399h1v1h-1zM407 395h1v1h-1zM456 289h1v1h-1zM220 322h1v1h-1zM341 322h1v1h-1zM409 336h1v1h-1zM234 361h1v1h-1zM407 294h1v1h-1zM405 316h1v1h-1zM401 378h1v1h-1zM501 328h1v1h-1zM419 314h1v1h-1zM450 293h1v1h-1zM221 324h1v1h-1zM406 319h1v1h-1zM474 322h1v1h-1zM399 357h1v1h-1zM470 322h1v1h-1zM383 287h1v1h-1zM428 371h1v1h-1zM218 327h1v1h-1zM492 347h1v1h-1zM388 296h1v1h-1zM333 364h1v1h-1zM221 285h1v1h-1zM346 382h1v1h-1zM347 305h1v1h-1zM253 315h1v1h-1zM210 387h1v1h-1zM441 361h1v1h-1zM205 378h1v1h-1zM209 331h1v1h-1zM198 341h1v1h-1zM469 352h1v1h-1zM278 288h1v1h-1zM409 297h1v1h-1zM400 385h1v1h-1zM479 368h1v1h-1zM447 297h1v1h-1zM371 334h1v1h-1zM333 349h1v1h-1zM394 386h1v1h-1zM552 399h1v1h-1zM267 371h1v1h-1zM348 344h1v1h-1zM468 399h1v1h-1zM491 392h1v1h-1zM463 351h1v1h-1zM221 391h1v1h-1zM510 353h1v1h-1zM501 356h1v1h-1zM220 361h1v1h-1zM438 301h1v1h-1zM387 285h1v1h-1zM492 306h1v1h-1zM483 319h1v1h-1zM268 399h1v1h-1zM445 299h1v1h-1zM519 324h1v1h-1zM415 285h1v1h-1zM363 313h1v1h-1zM388 397h1v1h-1zM549 384h1v1h-1zM335 295h1v1h-1zM404 375h1v1h-1zM431 378h1v1h-1zM226 360h1v1h-1zM553 352h1v1h-1zM234 289h1v1h-1zM421 346h1v1h-1zM322 328h1v1h-1zM282 298h1v1h-1zM491 398h1v1h-1zM390 344h1v1h-1zM258 388h1v1h-1zM423 301h1v1h-1zM334 355h1v1h-1zM539 349h1v1h-1zM251 308h1v1h-1zM365 334h1v1h-1zM405 350h1v1h-1zM437 352h1v1h-1zM417 302h1v1h-1zM500 324h1v1h-1zM204 379h1v1h-1zM466 314h1v1h-1zM557 316h1v1h-1zM296 343h1v1h-1zM524 346h1v1h-1zM505 375h1v1h-1zM373 369h1v1h-1zM345 324h1v1h-1zM529 287h1v1h-1zM261 296h1v1h-1zM302 378h1v1h-1zM216 369h1v1h-1zM316 297h1v1h-1zM319 300h1v1h-1zM236 399h1v1h-1zM329 355h1v1h-1zM247 341h1v1h-1zM337 376h1v1h-1zM492 345h1v1h-1zM260 380h1v1h-1zM374 383h1v1h-1zM455 382h1v1h-1zM333 352h1v1h-1zM503 369h1v1h-1zM553 326h1v1h-1zM522 302h1v1h-1zM270 317h1v1h-1zM303 307h1v1h-1zM310 380h1v1h-1zM254 289h1v1h-1zM554 392h1v1h-1zM404 393h1v1h-1zM530 390h1v1h-1zM366 357h1v1h-1zM543 294h1v1h-1zM225 290h1v1h-1zM396 292h1v1h-1zM457 378h1v1h-1zM444 291h1v1h-1zM494 372h1v1h-1zM423 394h1v1h-1zM540 310h1v1h-1zM535 325h1v1h-1zM550 340h1v1h-1zM383 292h1v1h-1zM522 293h1v1h-1zM388 377h1v1h-1zM561 387h1v1h-1zM402 344h1v1h-1zM300 304h1v1h-1zM426 341h1v1h-1zM543 390h1v1h-1zM475 376h1v1h-1zM250 305h1v1h-1zM196 335h1v1h-1zM320 391h1v1h-1zM311 302h1v1h-1zM308 338h1v1h-1zM550 360h1v1h-1zM263 371h1v1h-1zM205 370h1v1h-1zM556 362h1v1h-1zM283 378h1v1h-1zM352 363h1v1h-1zM284 330h1v1h-1zM237 328h1v1h-1zM522 294h1v1h-1zM373 369h1v1h-1zM222 393h1v1h-1zM543 355h1v1h-1zM221 370h1v1h-1zM434 362h1v1h-1zM443 388h1v1h-1zM232 389h1v1h-1zM431 343h1v1h-1zM202 361h1v1h-1zM509 362h1v1h-1zM521 306h1v1h-1zM508 331h1v1h-1zM381 292h1v1h-1zM197 367h1v1h-1zM360 364h1v1h-1zM446 347h1v1h-1zM498 310h1v1h-1zM212 383h1v1h-1zM502 311h1v1h-1zM431 400h1v1h-1zM519 335h1v1h-1zM557 286h1v1h-1zM478 326h1v1h-1zM374 292h1v1h-1zM486 335h1v1h-1zM356 320h1v1h-1zM228 373h1v1h-1zM244 358h1v1h-1zM351 380h1v1h-1zM397 380h1v1h-1zM258 296h1v1h-1zM501 350h1v1h-1zM411 330h1v1h-1zM218 328h1v1h-1zM513 372h1v1h-1zM295 358h1v1h-1zM466 323h1v1h-1zM310 326h1v1h-1zM202 352h1v1h-1zM349 338h1v1h-1zM547 322h1v1h-1zM368 347h1v1h-1zM463 363h1v1h-1zM331 374h1v1h-1zM468 330h1v1h-1zM228 337h1v1h-1zM373 399h1v1h-1zM340 389h1v1h-1zM553 361h1v1h-1zM263 395h1v1h-1zM354 379h1v1h-1zM388 292h1v1h-1zM372 301h1v1h-1zM321 380h1v1h-1zM244 392h1v1h-1zM468 384h1v1h-1zM510 305h1v1h-1zM485 298h1v1h-1zM514 341h1v1h-1zM504 344h1v1h-1zM263 334h1v1h-1zM355 350h1v1h-1zM332 292h1v1h-1zM420 334h1v1h-1zM230 379h1v1h-1zM537 287h1v1h-1zM327 297h1v1h-1zM306 306h1v1h-1zM349 343h1v1h-1zM505 339h1v1h-1zM358 393h1v1h-1zM535 400h1v1h-1zM482 311h1v1h-1zM561 317h1v1h-1zM378 296h1v1h-1zM502 359h1v1h-1zM233 346h1v1h-1zM245 350h1v1h-1zM547 301h1v1h-1zM309 376h1v1h-1zM464 359h1v1h-1zM195 390h1v1h-1zM262 292h1v1h-1zM449 394h1v1h-1zM423 348h1v1h-1zM209 342h1v1h-1zM553 319h1v1h-1zM215 368h1v1h-1zM464 285h1v1h-1zM434 371h1v1h-1zM254 327h1v1h-1zM285 374h1v1h-1zM407 327h1v1h-1zM491 301h1v1h-1zM406 350h1v1h-1zM464 391h1v1h-1zM336 395h1v1h-1zM342 373h1v1h-1zM345 329h1v1h-1zM238 383h1v1h-1zM397 331h1v1h-1zM299 309h1v1h-1zM195 297h1v1h-1zM241 381h1v1h-1zM496 347h1v1h-1zM226 345h1v1h-1zM278 291h1v1h-1zM556 363h1v1h-1zM366 364h1v1h-1zM394 322h1v1h-1zM334 314h1v1h-1zM238 313h1v1h-1zM204 303h1v1h-1zM209 305h1v1h-1zM447 359h1v1h-1zM410 337h1v1h-1zM383 355h1v1h-1zM355 324h1v1h-1zM291 353h1v1h-1zM415 298h1v1h-1zM432 288h1v1h-1zM377 362h1v1h-1zM512 396h1v1h-1zM458 291h1v1h-1zM319 374h1v1h-1zM259 314h1v1h-1zM360 372h1v1h-1zM298 316h1v1h-1zM346 304h1v1h-1zM452 348h1v1h-1zM249 312h1v1h-1zM472 348h1v1h-1zM221 389h1v1h-1zM383 393h1v1h-1zM305 293h1v1h-1zM282 322h1v1h-1zM544 290h1v1h-1zM196 397h1v1h-1zM376 396h1v1h-1zM237 395h1v1h-1zM377 290h1v1h-1zM299 340h1v1h-1zM317 363h1v1h-1zM531 313h1v1h-1zM244 330h1v1h-1zM468 323h1v1h-1zM223 301h1v1h-1zM421 297h1v1h-1zM329 341h1v1h-1zM258 316h1v1h-1zM490 335h1v1h-1zM330 285h1v1h-1zM473 355h1v1h-1zM387 353h1v1h-1zM318 376h1v1h-1zM424 303h1v1h-1zM550 347h1v1h-1zM309 310h1v1h-1zM258 346h1v1h-1zM339 313h1v1h-1zM478 296h1v1h-1zM455 373h1v1h-1zM371 338h1v1h-1zM220 352h1v1h-1zM256 291h1v1h-1zM518 393h1v1h-1zM431 397h1v1h-1zM394 315h1v1h-1zM282 293h1v1h-1zM425 356h1v1h-1zM301 285h1v1h-1zM319 301h1v1h-1zM436 295h1v1h-1zM372 387h1v1h-1zM505 391h1v1h-1zM438 338h1v1h-1zM253 367h1v1h-1zM202 302h1v1h-1zM340 302h1v1h-1zM207 361h1v1h-1zM325 367h1v1h-1zM500 302h1v1h-1zM494 323h1v1h-1zM426 303h1v1h-1zM399 347h1v1h-1zM462 288h1v1h-1zM518 396h1v1h-1zM276 372h1v1h-1zM534 347h1v1h-1zM290 391h1v1h-1zM447 391h1v1h-1zM305 325h1v1h-1zM371 310h1v1h-1zM223 341h1v1h-1zM429 345h1v1h-1zM419 302h1v1h-1zM343 320h1v1h-1zM415 383h1v1h-1zM344 381h1v1h-1zM293 397h1v1h-1zM334 323h1v1h-1zM510 355h1v1h-1zM227 371h1v1h-1zM486 349h1v1h-1zM512 303h1v1h-1zM479 357h1v1h-1zM468 293h1v1h-1zM382 344h1v1h-1zM236 381h1v1h-1zM408 346h1v1h-1zM301 379h1v1h-1zM238 394h1v1h-1zM388 343h1v1h-1zM453 341h1v1h-1zM223 386h1v1h-1zM257 357h1v1h-1zM513 337h1v1h-1zM269 372h1v1h-1zM429 377h1v1h-1zM227 302h1v1h-1zM256 350h1v1h-1zM235 368h1v1h-1zM412 298h1v1h-1zM265 298h1v1h-1zM234 363h1v1h-1zM232 395h1v1h-1zM422 355h1v1h-1zM543 305h1v1h-1zM336 392h1v1h-1zM509 359h1v1h-1zM525 358h1v1h-1zM518 354h1v1h-1zM219 287h1v1h-1zM297 329h1v1h-1zM415 297h1v1h-1zM264 360h1v1h-1zM229 318h1v1h-1zM276 290h1v1h-1zM306 356h1v1h-1zM371 337h1v1h-1zM457 311h1v1h-1zM435 311h1v1h-1zM303 287h1v1h-1zM405 288h1v1h-1zM242 388h1v1h-1zM400 304h1v1h-1zM526 286h1v1h-1zM374 358h1v1h-1zM370 316h1v1h-1zM290 363h1v1h-1zM297 380h1v1h-1zM465 320h1v1h-1zM505 356h1v1h-1zM343 318h1v1h-1zM296 318h1v1h-1zM542 312h1v1h-1zM476 329h1v1h-1zM281 356h1v1h-1zM493 288h1v1h-1zM326 386h1v1h-1zM526 289h1v1h-1zM353 378h1v1h-1zM253 383h1v1h-1zM215 359h1v1h-1zM507 316h1v1h-1zM318 293h1v1h-1zM246 309h1v1h-1zM539 303h1v1h-1zM434 319h1v1h-1zM291 331h1v1h-1zM195 391h1v1h-1zM516 391h1v1h-1zM283 362h1v1h-1zM492 316h1v1h-1zM513 314h1v1h-1zM493 363h1v1h-1zM360 297h1v1h-1zM389 362h1v1h-1zM486 321h1v1h-1zM321 367h1v1h-1zM395 395h1v1h-1zM280 377h1v1h-1zM310 370h1v1h-1zM209 316h1v1h-1zM382 300h1v1h-1zM417 302h1v1h-1zM475 322h1v1h-1zM460 398h1v1h-1zM505 390h1v1h-1zM478 289h1v1h-1zM542 306h1v1h-1zM480 385h1v1h-1zM477 361h1v1h-1zM315 322h1v1h-1zM258 358h1v1h-1zM420 324h1v1h-1zM249 322h1v1h-1zM205 358h1v1h-1zM397 351h1v1h-1zM427 345h1v1h-1zM286 386h1v1h-1zM508 295h1v1h-1zM550 314h1v1h-1zM544 320h1v1h-1zM298 285h1v1h-1zM294 369h1v1h-1zM235 307h1v1h-1zM463 376h1v1h-1zM283 359h1v1h-1zM524 372h1v1h-1zM502 386h1v1h-1zM514 385h1v1h-1zM440 345h1v1h-1zM508 303h1v1h-1zM346 349h1v1h-1zM432 352h1v1h-1zM547 352h1v1h-1zM305 320h1v1h-1zM246 359h1v1h-1zM348 363h1v1h-1zM332 355h1v1h-1zM301 321h1v1h-1zM352 332h1v1h-1zM416 348h1v1h-1zM476 308h1v1h-1zM377 303h1v1h-1zM453 348h1v1h-1zM460 328h1v1h-1zM513 305h1v1h-1zM391 341h1v1h-1zM239 300h1v1h-1zM203 325h1v1h-1zM497 381h1v1h-1zM562 394h1v1h-1zM510 314h1v1h-1zM418 379h1v1h-1zM443 362h1v1h-1zM519 371h1v1h-1zM475 331h1v1h-1zM536 393h1v1h-1zM481 319h1v1h-1zM241 395h1v1h-1zM540 355h1v1h-1zM555 291h1v1h-1zM414 346h1v1h-1zM441 380h1v1h-1zM280 335h1v1h-1zM456 364h1v1h-1zM378 323h1v1h-1zM279 288h1v1h-1zM273 307h1v1h-1zM559 308h1v1h-1zM282 357h1v1h-1zM459 313h1v1h-1zM344 296h1v1h-1zM528 394h1v1h-1zM426 285h1v1h-1zM476 310h1v1h-1zM424 294h1v1h-1zM521 385h1v1h-1zM430 305h1v1h-1zM377 332h1v1h-1zM420 321h1v1h-1zM253 363h1v1h-1zM471 345h1v1h-1zM478 285h1v1h-1zM484 361h1v1h-1zM412 326h1v1h-1zM291 361h1v1h-1zM544 319h1v1h-1zM369 355h1v1h-1zM458 396h1v1h-1zM496 290h1v1h-1zM526 315h1v1h-1zM444 329h1v1h-1zM342 348h1v1h-1zM276 341h1v1h-1zM313 311h1v1h-1zM419 314h1v1h-1zM411 329h1v1h-1zM502 398h1v1h-1zM333 344h1v1h-1zM512 366h1v1h-1zM437 366h1v1h-1zM285 315h1v1h-1zM512 372h1v1h-1zM474 375h1v1h-1zM366 331h1v1h-1zM325 340h1v1h-1zM559 340h1v1h-1zM449 372h1v1h-1zM326 362h1v1h-1zM513 318h1v1h-1zM390 396h1v1h-1zM419 335h1v1h-1zM400 339h1v1h-1zM490 303h1v1h-1zM462 355h1v1h-1zM417 356h1v1h-1zM314 304h1v1h-1zM294 296h1v1h-1zM377 300h1v1h-1zM202 352h1v1h-1zM222 396h1v1h-1zM336 288h1v1h-1zM285 348h1v1h-1zM248 392h1v1h-1zM431 287h1v1h-1zM279 326h1v1h-1zM201 372h1v1h-1zM222 335h1v1h-1zM356 345h1v1h-1zM446 390h1v1h-1zM510 367h1v1h-1zM317 360h1v1h-1zM249 289h1v1h-1zM539 361h1v1h-1zM317 345h1v1h-1zM385 331h1v1h-1zM440 377h1v1h-1zM251 338h1v1h-1zM413 346h1v1h-1zM309 310h1v1h-1zM276 347h1v1h-1zM443 319h1v1h-1zM313 360h1v1h-1zM224 296h1v1h-1zM509 315h1v1h-1zM223 308h1v1h-1zM364 349h1v1h-1zM398 373h1v1h-1zM247 314h1v1h-1zM200 373h1v1h-1zM495 318h1v1h-1zM211 327h1v1h-1zM318 346h1v1h-1zM428 310h1v1h-1zM455 365h1v1h-1zM285 317h1v1h-1zM238 380h1v1h-1zM525 298h1v1h-1zM212 299h1v1h-1zM238 290h1v1h-1zM472 288h1v1h-1zM295 399h1v1h-1zM329 386h1v1h-1zM496 342h1v1h-1zM362 303h1v1h-1zM431 371h1v1h-1zM478 364h1v1h-1zM313 341h1v1h-1zM562 353h1v1h-1zM296 374h1v1h-1zM415 385h1v1h-1zM465 316h1v1h-1zM204 384h1v1h-1zM248 394h1v1h-1zM260 295h1v1h-1zM454 313h1v1h-1zM289 364h1v1h-1zM482 317h1v1h-1zM340 285h1v1h-1zM384 340h1v1h-1zM542 342h1v1h-1zM327 383h1v1h-1zM200 348h1v1h-1zM399 318h1v1h-1zM258 336h1v1h-1zM532 383h1v1h-1zM361 373h1v1h-1zM403 325h1v1h-1zM230 352h1v1h-1zM377 393h1v1h-1zM395 313h1v1h-1zM376 285h1v1h-1zM441 323h1v1h-1zM457 391h1v1h-1zM270 343h1v1h-1zM493 317h1v1h-1zM401 287h1v1h-1zM321 325h1v1h-1zM500 351h1v1h-1zM415 376h1v1h-1zM545 354h1v1h-1zM412 351h1v1h-1zM383 355h1v1h-1zM560 298h1v1h-1zM446 347h1v1h-1zM504 317h1v1h-1zM347 339h1v1h-1zM499 346h1v1h-1zM235 379h1v1h-1zM376 304h1v1h-1zM488 365h1v1h-1zM255 335h1v1h-1zM308 393h1v1h-1zM260 380h1v1h-1zM207 302h1v1h-1zM480 323h1v1h-1zM383 378h1v1h-1zM201 382h1v1h-1zM448 369h1v1h-1zM282 290h1v1h-1zM475 383h1v1h-1zM434 293h1v1h-1zM425 314h1v1h-1zM205 384h1v1h-1zM453 383h1v1h-1zM314 344h1v1h-1zM455 287h1v1h-1zM486 362h1v1h-1zM289 352h1v1h-1zM462 308h1v1h-1zM309 293h1v1h-1zM291 321h1v1h-1zM463 385h1v1h-1zM500 348h1v1h-1zM430 338h1v1h-1zM520 366h1v1h-1zM483 359h1v1h-1zM525 346h1v1h-1zM405 344h1v1h-1zM467 331h1v1h-1zM297 295h1v1h-1zM548 400h1v1h-1zM477 352h1v1h-1zM321 359h1v1h-1zM247 293h1v1h-1zM533 321h1v1h-1zM322 366h1v1h-1zM508 304h1v1h-1zM476 340h1v1h-1zM505 330h1v1h-1zM414 400h1v1h-1zM317 307h1v1h-1zM350 400h1v1h-1zM551 285h1v1h-1zM265 325h1v1h-1zM434 325h1v1h-1zM454 342h1v1h-1zM229 339h1v1h-1zM489 365h1v1h-1zM205 383h1v1h-1zM478 388h1v1h-1zM494 337h1v1h-1zM424 371h1v1h-1zM423 351h1v1h-1zM528 321h1v1h-1zM355 311h1v1h-1zM332 338h1v1h-1zM314 356h1v1h-1zM461 339h1v1h-1zM381 320h1v1h-1zM200 388h1v1h-1zM337 368h1v1h-1zM438 353h1v1h-1zM265 294h1v1h-1zM234 386h1v1h-1zM543 320h1v1h-1zM204 368h1v1h-1zM274 293h1v1h-1zM347 329h1v1h-1zM523 371h1v1h-1zM462 390h1v1h-1zM512 391h1v1h-1zM286 400h1v1h-1zM453 400h1v1h-1zM243 381h1v1h-1zM388 313h1v1h-1zM448 327h1v1h-1zM343 369h1v1h-1zM536 303h1v1h-1zM426 317h1v1h-1zM225 359h1v1h-1zM503 360h1v1h-1zM531 376h1v1h-1zM496 338h1v1h-1zM440 333h1v1h-1zM230 357h1v1h-1zM487 396h1v1h-1zM287 351h1v1h-1zM344 380h1v1h-1zM477 293h1v1h-1zM501 396h1v1h-1zM383 371h1v1h-1zM448 290h1v1h-1zM370 344h1v1h-1zM312 311h1v1h-1zM460 365h1v1h-1zM264 394h1v1h-1zM501 355h1v1h-1zM331 317h1v1h-1zM492 345h1v1h-1zM318 344h1v1h-1zM217 330h1v1h-1zM477 359h1v1h-1zM409 304h1v1h-1zM324 309h1v1h-1zM255 334h1v1h-1zM208 366h1v1h-1zM463 343h1v1h-1zM554 336h1v1h-1zM266 362h1v1h-1zM386 369h1v1h-1zM362 321h1v1h-1zM543 400h1v1h-1zM373 380h1v1h-1zM557 316h1v1h-1zM295 340h1v1h-1zM544 336h1v1h-1zM286 296h1v1h-1zM251 304h1v1h-1zM349 334h1v1h-1zM383 333h1v1h-1zM320 327h1v1h-1zM350 331h1v1h-1zM319 305h1v1h-1zM275 336h1v1h-1zM533 296h1v1h-1zM343 386h1v1h-1zM376 318h1v1h-1zM559 307h1v1h-1zM414 311h1v1h-1zM248 375h1v1h-1zM448 392h1v1h-1zM333 334h1v1h-1zM426 337h1v1h-1zM281 360h1v1h-1zM429 293h1v1h-1zM209 331h1v1h-1zM485 326h1v1h-1zM399 364h1v1h-1zM379 285h1v1h-1zM445 294h1v1h-1zM411 286h1v1h-1zM443 377h1v1h-1zM221 365h1v1h-1zM236 303h1v1h-1zM536 325h1v1h-1zM315 372h1v1h-1zM510 304h1v1h-1zM406 358h1v1h-1zM424 316h1v1h-1zM334 352h1v1h-1zM353 394h1v1h-1zM365 329h1v1h-1zM360 316h1v1h-1zM226 353h1v1h-1zM538 369h1v1h-1zM235 390h1v1h-1zM363 366h1v1h-1zM448 390h1v1h-1zM548 376h1v1h-1zM540 393h1v1h-1zM242 364h1v1h-1zM220 365h1v1h-1zM285 333h1v1h-1zM350 314h1v1h-1zM288 338h1v1h-1zM341 374h1v1h-1zM253 332h1v1h-1zM208 371h1v1h-1zM463 381h1v1h-1zM276 371h1v1h-1zM243 378h1v1h-1zM443 295h1v1h-1zM467 302h1v1h-1zM541 347h1v1h-1zM276 323h1v1h-1zM418 385h1v1h-1zM458 349h1v1h-1zM547 351h1v1h-1zM353 332h1v1h-1zM339 288h1v1h-1zM547 390h1v1h-1zM212 334h1v1h-1zM293 390h1v1h-1zM249 368h1v1h-1zM416 352h1v1h-1zM471 396h1v1h-1zM274 376h1v1h-1zM233 343h1v1h-1zM329 340h1v1h-1zM473 302h1v1h-1zM331 361h1v1h-1zM270 346h1v1h-1zM248 306h1v1h-1zM523 343h1v1h-1zM421 371h1v1h-1zM467 290h1v1h-1zM198 322h1v1h-1zM486 299h1v1h-1zM394 346h1v1h-1zM360 321h1v1h-1zM317 385h1v1h-1zM356 351h1v1h-1zM343 328h1v1h-1zM395 344h1v1h-1zM195 331h1v1h-1zM225 374h1v1h-1zM213 334h1v1h-1zM350 354h1v1h-1zM220 354h1v1h-1zM543 397h1v1h-1zM248 358h1v1h-1zM418 386h1v1h-1zM507 365h1v1h-1zM404 297h1v1h-1zM529 400h1v1h-1zM370 342h1v1h-1zM530 371h1v1h-1zM301 390h1v1h-1zM445 347h1v1h-1zM414 314h1v1h-1zM464 392h1v1h-1zM223 375h1v1h-1zM319 379h1v1h-1zM561 364h1v1h-1zM280 345h1v1h-1zM507 327h1v1h-1zM458 383h1v1h-1zM456 380h1v1h-1zM393 333h1v1h-1zM397 381h1v1h-1zM425 288h1v1h-1zM548 344h1v1h-1zM281 319h1v1h-1zM480 374h1v1h-1zM271 395h1v1h-1zM237 349h1v1h-1zM510 373h1v1h-1zM428 295h1v1h-1zM532 290h1v1h-1zM510 385h1v1h-1zM446 321h1v1h-1zM456 291h1v1h-1zM405 399h1v1h-1zM286 325h1v1h-1zM296 386h1v1h-1zM450 351h1v1h-1zM214 393h1v1h-1zM509 375h1v1h-1zM394 368h1v1h-1zM287 345h1v1h-1zM250 308h1v1h-1zM455 307h1v1h-1zM430 311h1v1h-1zM279 343h1v1h-1zM331 348h1v1h-1zM290 396h1v1h-1zM280 325h1v1h-1zM216 400h1v1h-1zM525 292h1v1h-1zM536 312h1v1h-1zM323 378h1v1h-1zM536 339h1v1h-1zM428 303h1v1h-1zM256 368h1v1h-1zM472 344h1v1h-1zM553 379h1v1h-1zM352 293h1v1h-1zM340 378h1v1h-1zM238 380h1v1h-1zM546 361h1v1h-1zM223 299h1v1h-1zM288 380h1v1h-1zM347 307h1v1h-1zM212 387h1v1h-1zM544 364h1v1h-1zM287 366h1v1h-1zM233 331h1v1h-1zM484 299h1v1h-1zM517 289h1v1h-1zM390 337h1v1h-1zM257 394h1v1h-1zM546 365h1v1h-1zM553 314h1v1h-1zM327 295h1v1h-1zM392 374h1v1h-1zM300 334h1v1h-1zM441 286h1v1h-1zM283 325h1v1h-1zM213 379h1v1h-1zM277 333h1v1h-1zM309 382h1v1h-1zM419 319h1v1h-1zM276 294h1v1h-1zM429 394h1v1h-1zM235 317h1v1h-1zM258 357h1v1h-1zM238 358h1v1h-1zM527 357h1v1h-1zM423 349h1v1h-1zM434 285h1v1h-1zM431 337h1v1h-1zM423 307h1v1h-1zM521 385h1v1h-1zM366 360h1v1h-1zM419 302h1v1h-1zM334 341h1v1h-1zM448 397h1v1h-1zM372 383h1v1h-1zM209 323h1v1h-1zM502 344h1v1h-1zM512 369h1v1h-1zM480 377h1v1h-1zM464 382h1v1h-1zM307 306h1v1h-1zM536 375h1v1h-1zM419 312h1v1h-1zM335 331h1v1h-1zM342 355h1v1h-1zM237 326h1v1h-1zM223 385h1v1h-1zM536 381h1v1h-1zM266 385h1v1h-1zM227 367h1v1h-1zM338 344h1v1h-1zM207 323h1v1h-1zM439 390h1v1h-1zM299 365h1v1h-1zM202 330h1v1h-1zM425 340h1v1h-1zM220 312h1v1h-1zM209 367h1v1h-1zM505 363h1v1h-1zM504 354h1v1h-1zM472 294h1v1h-1zM445 356h1v1h-1zM419 351h1v1h-1zM239 323h1v1h-1zM260 313h1v1h-1zM479 304h1v1h-1zM487 346h1v1h-1zM329 331h1v1h-1zM440 359h1v1h-1zM540 320h1v1h-1zM293 362h1v1h-1zM417 318h1v1h-1zM386 380h1v1h-1zM299 361h1v1h-1zM453 379h1v1h-1zM387 387h1v1h-1zM517 352h1v1h-1zM508 382h1v1h-1zM348 386h1v1h-1zM358 330h1v1h-1zM197 319h1v1h-1zM375 365h1v1h-1zM265 301h1v1h-1zM285 297h1v1h-1zM539 368h1v1h-1zM393 382h1v1h-1zM466 388h1v1h-1zM467 347h1v1h-1zM369 332h1v1h-1zM359 291h1v1h-1zM319 299h1v1h-1zM389 396h1v1h-1zM360 323h1v1h-1zM490 286h1v1h-1zM415 324h1v1h-1zM389 356h1v1h-1zM303 342h1v1h-1zM236 323h1v1h-1zM437 292h1v1h-1zM526 321h1v1h-1zM207 328h1v1h-1zM243 371h1v1h-1zM511 295h1v1h-1zM517 295h1v1h-1zM239 344h1v1h-1zM281 365h1v1h-1zM466 330h1v1h-1zM241 322h1v1h-1zM257 349h1v1h-1zM232 385h1v1h-1zM305 366h1v1h-1zM439 357h1v1h-1zM282 361h1v1h-1zM268 359h1v1h-1zM236 335h1v1h-1zM416 336h1v1h-1zM342 377h1v1h-1zM510 291h1v1h-1zM399 382h1v1h-1zM254 300h1v1h-1zM231 298h1v1h-1zM437 338h1v1h-1zM307 315h1v1h-1zM499 358h1v1h-1zM494 312h1v1h-1zM399 303h1v1h-1zM374 385h1v1h-1zM266 356h1v1h-1zM551 332h1v1h-1zM201 361h1v1h-1zM440 389h1v1h-1zM233 295h1v1h-1zM411 365h1v1h-1zM375 292h1v1h-1zM496 364h1v1h-1zM420 310h1v1h-1zM392 343h1v1h-1zM268 286h1v1h-1zM458 330h1v1h-1zM230 325h1v1h-1zM265 335h1v1h-1zM455 374h1v1h-1zM470 359h1v1h-1zM303 348h1v1h-1zM493 384h1v1h-1zM354 335h1v1h-1zM554 291h1v1h-1zM441 392h1v1h-1zM500 342h1v1h-1zM268 307h1v1h-1zM399 322h1v1h-1zM516 289h1v1h-1zM243 367h1v1h-1zM415 313h1v1h-1zM551 337h1v1h-1zM232 366h1v1h-1zM428 308h1v1h-1zM508 308h1v1h-1zM442 307h1v1h-1zM474 317h1v1h-1zM522 365h1v1h-1zM268 358h1v1h-1zM307 285h1v1h-1zM504 309h1v1h-1zM317 361h1v1h-1zM209 354h1v1h-1zM550 301h1v1h-1zM349 388h1v1h-1zM554 394h1v1h-1zM303 386h1v1h-1zM353 372h1v1h-1zM502 356h1v1h-1zM510 349h1v1h-1zM515 319h1v1h-1zM478 314h1v1h-1zM399 315h1v1h-1zM443 295h1v1h-1zM325 292h1v1h-1zM340 359h1v1h-1zM434 296h1v1h-1zM526 397h1v1h-1zM269 320h1v1h-1zM269 342h1v1h-1zM452 364h1v1h-1zM496 285h1v1h-1zM411 334h1v1h-1zM413 331h1v1h-1zM287 324h1v1h-1zM229 392h1v1h-1zM319 346h1v1h-1zM203 285h1v1h-1zM424 363h1v1h-1zM441 325h1v1h-1zM313 378h1v1h-1zM434 398h1v1h-1zM297 348h1v1h-1zM427 330h1v1h-1zM369 384h1v1h-1zM253 330h1v1h-1zM267 379h1v1h-1zM260 329h1v1h-1zM283 389h1v1h-1zM409 339h1v1h-1zM253 322h1v1h-1zM562 288h1v1h-1zM323 346h1v1h-1zM449 386h1v1h-1zM216 361h1v1h-1zM463 300h1v1h-1zM385 373h1v1h-1zM436 379h1v1h-1zM200 373h1v1h-1zM438 395h1v1h-1zM499 388h1v1h-1zM533 355h1v1h-1zM428 353h1v1h-1zM382 352h1v1h-1zM348 315h1v1h-1zM292 292h1v1h-1zM451 358h1v1h-1zM354 313h1v1h-1zM560 331h1v1h-1zM520 348h1v1h-1zM196 325h1v1h-1zM301 307h1v1h-1zM512 387h1v1h-1zM397 348h1v1h-1zM543 377h1v1h-1zM435 329h1v1h-1zM252 373h1v1h-1zM394 327h1v1h-1zM242 354h1v1h-1zM510 341h1v1h-1zM509 391h1v1h-1zM508 305h1v1h-1zM453 365h1v1h-1zM454 318h1v1h-1zM549 396h1v1h-1zM417 318h1v1h-1zM536 345h1v1h-1zM231 312h1v1h-1zM214 314h1v1h-1zM388 389h1v1h-1zM498 384h1v1h-1zM310 361h1v1h-1zM443 399h1v1h-1zM278 377h1v1h-1zM308 360h1v1h-1zM531 365h1v1h-1zM241 293h1v1h-1zM224 322h1v1h-1zM261 363h1v1h-1zM208 381h1v1h-1zM444 322h1v1h-1zM452 324h1v1h-1zM351 400h1v1h-1zM273 386h1v1h-1zM284 351h1v1h-1zM243 392h1v1h-1zM515 324h1v1h-1zM335 351h1v1h-1zM338 323h1v1h-1zM246 307h1v1h-1zM341 318h1v1h-1zM542 358h1v1h-1zM507 326h1v1h-1zM384 304h1v1h-1zM225 296h1v1h-1zM392 372h1v1h-1zM431 389h1v1h-1zM303 300h1v1h-1zM457 289h1v1h-1zM334 331h1v1h-1zM237 353h1v1h-1zM533 388h1v1h-1zM239 288h1v1h-1zM467 384h1v1h-1zM503 379h1v1h-1zM370 303h1v1h-1zM446 349h1v1h-1zM226 349h1v1h-1zM237 386h1v1h-1zM522 394h1v1h-1zM271 354h1v1h-1zM291 343h1v1h-1zM213 385h1v1h-1zM317 357h1v1h-1zM346 369h1v1h-1zM470 291h1v1h-1zM501 310h1v1h-1zM235 359h1v1h-1zM359 377h1v1h-1zM547 296h1v1h-1zM241 292h1v1h-1zM355 308h1v1h-1zM407 327h1v1h-1zM489 306h1v1h-1zM494 294h1v1h-1zM199 367h1v1h-1zM229 389h1v1h-1zM519 362h1v1h-1zM259 350h1v1h-1zM510 374h1v1h-1zM381 309h1v1h-1zM501 394h1v1h-1zM509 392h1v1h-1zM274 371h1v1h-1zM265 314h1v1h-1zM419 312h1v1h-1zM238 356h1v1h-1zM309 286h1v1h-1zM552 393h1v1h-1zM377 367h1v1h-1zM198 338h1v1h-1zM489 301h1v1h-1zM253 319h1v1h-1zM311 351h1v1h-1zM437 292h1v1h-1zM251 383h1v1h-1zM553 376h1v1h-1zM255 364h1v1h-1zM401 301h1v1h-1zM234 352h1v1h-1zM465 296h1v1h-1zM223 321h1v1h-1zM425 352h1v1h-1zM473 342h1v1h-1zM529 394h1v1h-1zM399 327h1v1h-1zM374 349h1v1h-1zM302 315h1v1h-1zM383 290h1v1h-1zM303 288h1v1h-1zM293 329h1v1h-1zM410 346h1v1h-1zM523 341h1v1h-1zM510 389h1v1h-1zM308 345h1v1h-1zM305 359h1v1h-1zM325 391h1v1h-1zM404 342h1v1h-1zM324 295h1v1h-1zM427 311h1v1h-1zM324 298h1v1h-1zM343 288h1v1h-1zM368 288h1v1h-1zM296 329h1v1h-1zM490 334h1v1h-1zM215 312h1v1h-1zM316 394h1v1h-1zM329 371h1v1h-1zM287 382h1v1h-1zM274 372h1v1h-1zM200 302h1v1h-1zM213 309h1v1h-1zM198 325h1v1h-1zM485 350h1v1h-1zM389 391h1v1h-1zM286 391h1v1h-1zM234 287h1v1h-1zM223 288h1v1h-1zM367 308h1v1h-1zM414 326h1v1h-1zM198 326h1v1h-1zM374 363h1v1h-1zM260 286h1v1h-1zM486 311h1v1h-1zM405 325h1v1h-1zM225 307h1v1h-1zM506 393h1v1h-1zM366 299h1v1h-1zM348 341h1v1h-1zM356 313h1v1h-1zM321 297h1v1h-1zM259 376h1v1h-1zM357 379h1v1h-1zM376 293h1v1h-1zM492 366h1v1h-1zM311 352h1v1h-1zM219 336h1v1h-1zM473 299h1v1h-1zM444 320h1v1h-1zM286 365h1v1h-1zM463 315h1v1h-1zM215 286h1v1h-1zM508 296h1v1h-1zM214 399h1v1h-1zM301 369h1v1h-1zM545 379h1v1h-1zM348 369h1v1h-1zM535 287h1v1h-1zM543 323h1v1h-1zM356 383h1v1h-1zM471 348h1v1h-1zM444 296h1v1h-1zM464 375h1v1h-1zM196 335h1v1h-1zM508 394h1v1h-1zM322 307h1v1h-1zM373 378h1v1h-1zM359 378h1v1h-1zM219 385h1v1h-1zM400 366h1v1h-1zM196 377h1v1h-1zM414 389h1v1h-1zM440 301h1v1h-1zM226 318h1v1h-1zM345 399h1v1h-1zM243 337h1v1h-1zM413 359h1v1h-1zM513 301h1v1h-1zM452 333h1v1h-1zM479 328h1v1h-1zM403 341h1v1h-1zM325 373h1v1h-1zM466 295h1v1h-1zM329 354h1v1h-1zM283 330h1v1h-1zM495 398h1v1h-1zM295 301h1v1h-1zM442 397h1v1h-1zM537 330h1v1h-1zM449 386h1v1h-1zM423 377h1v1h-1zM485 358h1v1h-1zM393 373h1v1h-1zM355 332h1v1h-1zM382 385h1v1h-1zM310 391h1v1h-1zM229 357h1v1h-1zM265 375h1v1h-1zM354 312h1v1h-1zM274 287h1v1h-1zM239 399h1v1h-1zM347 384h1v1h-1zM329 376h1v1h-1zM365 358h1v1h-1zM419 389h1v1h-1zM242 300h1v1h-1zM418 375h1v1h-1zM389 344h1v1h-1zM357 365h1v1h-1zM242 398h1v1h-1zM449 309h1v1h-1zM266 337h1v1h-1zM221 322h1v1h-1zM524 348h1v1h-1zM552 381h1v1h-1zM494 358h1v1h-1zM304 394h1v1h-1zM360 378h1v1h-1zM399 379h1v1h-1zM241 377h1v1h-1zM403 292h1v1h-1zM445 381h1v1h-1zM248 400h1v1h-1zM268 332h1v1h-1zM243 316h1v1h-1zM236 290h1v1h-1zM469 311h1v1h-1zM367 330h1v1h-1zM234 366h1v1h-1zM260 340h1v1h-1zM275 341h1v1h-1zM220 295h1v1h-1zM547 327h1v1h-1zM508 387h1v1h-1zM448 307h1v1h-1zM454 316h1v1h-1zM405 318h1v1h-1zM492 292h1v1h-1zM558 314h1v1h-1zM428 386h1v1h-1zM356 388h1v1h-1zM364 295h1v1h-1zM416 376h1v1h-1zM346 349h1v1h-1zM244 320h1v1h-1zM479 291h1v1h-1zM560 328h1v1h-1zM541 378h1v1h-1zM320 330h1v1h-1zM513 352h1v1h-1zM247 314h1v1h-1zM357 306h1v1h-1zM482 333h1v1h-1zM508 380h1v1h-1zM432 367h1v1h-1zM214 334h1v1h-1zM471 395h1v1h-1zM334 391h1v1h-1zM301 355h1v1h-1zM512 314h1v1h-1zM247 297h1v1h-1zM233 364h1v1h-1zM548 397h1v1h-1zM434 383h1v1h-1zM345 360h1v1h-1zM509 396h1v1h-1zM551 319h1v1h-1zM510 333h1v1h-1zM238 335h1v1h-1zM499 367h1v1h-1zM372 365h1v1h-1zM370 398h1v1h-1zM241 327h1v1h-1zM227 314h1v1h-1zM502 365h1v1h-1zM530 331h1v1h-1zM517 318h1v1h-1zM530 285h1v1h-1zM235 311h1v1h-1zM465 297h1v1h-1zM279 332h1v1h-1zM275 384h1v1h-1zM434 368h1v1h-1zM544 308h1v1h-1zM376 303h1v1h-1zM345 315h1v1h-1zM382 361h1v1h-1zM530 287h1v1h-1zM209 374h1v1h-1zM379 289h1v1h-1zM462 333h1v1h-1zM337 356h1v1h-1zM560 360h1v1h-1zM551 300h1v1h-1zM442 353h1v1h-1zM514 332h1v1h-1zM394 317h1v1h-1zM335 392h1v1h-1zM344 314h1v1h-1zM550 327h1v1h-1zM239 348h1v1h-1zM254 398h1v1h-1zM454 348h1v1h-1zM501 370h1v1h-1zM295 379h1v1h-1zM402 311h1v1h-1zM456 290h1v1h-1zM203 387h1v1h-1zM461 388h1v1h-1zM211 391h1v1h-1zM254 343h1v1h-1zM256 290h1v1h-1zM371 378h1v1h-1zM438 294h1v1h-1zM306 353h1v1h-1zM234 288h1v1h-1zM257 285h1v1h-1zM310 367h1v1h-1zM264 355h1v1h-1zM298 285h1v1h-1zM320 286h1v1h-1zM271 342h1v1h-1zM527 335h1v1h-1zM461 393h1v1h-1zM357 295h1v1h-1zM481 327h1v1h-1zM212 377h1v1h-1zM500 385h1v1h-1zM529 374h1v1h-1zM212 339h1v1h-1zM488 341h1v1h-1zM487 289h1v1h-1zM208 313h1v1h-1zM424 368h1v1h-1zM558 322h1v1h-1zM442 345h1v1h-1zM409 381h1v1h-1zM309 382h1v1h-1zM554 396h1v1h-1zM198 341h1v1h-1zM238 340h1v1h-1zM242 393h1v1h-1zM246 286h1v1h-1zM252 325h1v1h-1zM522 323h1v1h-1zM300 312h1v1h-1zM517 369h1v1h-1zM259 386h1v1h-1zM527 290h1v1h-1zM548 299h1v1h-1zM341 395h1v1h-1zM400 355h1v1h-1zM410 294h1v1h-1zM470 352h1v1h-1zM438 379h1v1h-1zM461 375h1v1h-1zM542 293h1v1h-1zM369 305h1v1h-1zM210 375h1v1h-1zM320 309h1v1h-1zM290 393h1v1h-1zM375 306h1v1h-1zM274 369h1v1h-1zM386 364h1v1h-1zM276 346h1v1h-1zM305 348h1v1h-1zM525 287h1v1h-1zM256 339h1v1h-1zM553 353h1v1h-1zM476 339h1v1h-1zM241 341h1v1h-1zM524 337h1v1h-1zM314 393h1v1h-1zM249 325h1v1h-1zM511 363h1v1h-1zM212 391h1v1h-1zM224 287h1v1h-1zM343 377h1v1h-1zM542 292h1v1h-1zM359 336h1v1h-1zM497 368h1v1h-1zM406 400h1v1h-1zM228 356h1v1h-1zM439 348h1v1h-1zM369 289h1v1h-1zM431 305h1v1h-1zM229 314h1v1h-1zM209 389h1v1h-1zM277 287h1v1h-1zM371 287h1v1h-1zM436 333h1v1h-1zM253 334h1v1h-1zM512 393h1v1h-1zM255 394h1v1h-1zM308 315h1v1h-1zM553 379h1v1h-1zM489 330h1v1h-1zM403 383h1v1h-1zM415 369h1v1h-1zM524 293h1v1h-1zM243 345h1v1h-1zM514 339h1v1h-1zM538 343h1v1h-1zM327 356h1v1h-1zM432 373h1v1h-1zM357 336h1v1h-1zM461 345h1v1h-1zM225 372h1v1h-1zM394 309h1v1h-1zM419 302h1v1h-1zM202 319h1v1h-1zM297 396h1v1h-1zM393 362h1v1h-1zM439 343h1v1h-1zM552 399h1v1h-1zM383 305h1v1h-1zM394 349h1v1h-1zM483 349h1v1h-1zM520 392h1v1h-1zM545 394h1v1h-1zM517 392h1v1h-1zM286 395h1v1h-1zM485 311h1v1h-1zM414 354h1v1h-1zM543 359h1v1h-1zM300 385h1v1h-1zM384 288h1v1h-1zM326 357h1v1h-1zM446 318h1v1h-1zM425 322h1v1h-1zM315 394h1v1h-1zM279 349h1v1h-1zM343 301h1v1h-1zM427 332h1v1h-1zM428 295h1v1h-1zM445 336h1v1h-1zM209 342h1v1h-1zM440 336h1v1h-1zM367 353h1v1h-1zM241 306h1v1h-1zM368 307h1v1h-1zM560 372h1v1h-1zM522 351h1v1h-1zM404 391h1v1h-1zM447 337h1v1h-1zM453 371h1v1h-1zM323 360h1v1h-1zM195 291h1v1h-1zM299 348h1v1h-1zM470 317h1v1h-1zM493 301h1v1h-1zM432 379h1v1h-1zM469 367h1v1h-1zM533 364h1v1h-1zM374 349h1v1h-1zM264 299h1v1h-1zM498 378h1v1h-1zM429 310h1v1h-1zM556 333h1v1h-1zM406 359h1v1h-1zM197 318h1v1h-1zM195 395h1v1h-1zM467 354h1v1h-1zM453 358h1v1h-1zM206 321h1v1h-1zM432 348h1v1h-1zM360 355h1v1h-1zM489 301h1v1h-1zM526 360h1v1h-1zM432 381h1v1h-1zM420 287h1v1h-1zM384 355h1v1h-1zM516 355h1v1h-1zM522 319h1v1h-1zM534 313h1v1h-1zM370 294h1v1h-1zM410 353h1v1h-1zM559 288h1v1h-1zM508 389h1v1h-1zM396 363h1v1h-1zM456 371h1v1h-1zM343 306h1v1h-1zM233 341h1v1h-1zM362 391h1v1h-1zM355 355h1v1h-1zM292 387h1v1h-1zM473 325h1v1h-1zM497 358h1v1h-1zM408 329h1v1h-1zM286 383h1v1h-1zM541 348h1v1h-1zM379 356h1v1h-1zM324 338h1v1h-1zM406 373h1v1h-1zM453 353h1v1h-1zM518 336h1v1h-1zM351 398h1v1h-1zM326 346h1v1h-1zM421 334h1v1h-1zM230 376h1v1h-1zM536 297h1v1h-1zM243 353h1v1h-1zM455 377h1v1h-1zM338 338h1v1h-1zM526 297h1v1h-1zM280 355h1v1h-1zM347 387h1v1h-1zM324 303h1v1h-1zM338 343h1v1h-1zM484 382h1v1h-1zM385 367h1v1h-1zM214 367h1v1h-1zM468 382h1v1h-1zM284 335h1v1h-1zM398 339h1v1h-1zM528 296h1v1h-1zM300 286h1v1h-1zM510 290h1v1h-1zM228 367h1v1h-1zM462 313h1v1h-1zM552 301h1v1h-1zM541 363h1v1h-1zM419 329h1v1h-1zM344 307h1v1h-1zM235 362h1v1h-1zM469 318h1v1h-1zM469 350h1v1h-1zM285 363h1v1h-1zM437 384h1v1h-1zM388 375h1v1h-1zM489 390h1v1h-1zM452 345h1v1h-1zM349 366h1v1h-1zM334 299h1v1h-1zM444 295h1v1h-1zM232 342h1v1h-1zM221 372h1v1h-1zM237 315h1v1h-1zM511 322h1v1h-1zM475 347h1v1h-1zM434 349h1v1h-1zM299 304h1v1h-1zM374 317h1v1h-1zM519 355h1v1h-1zM380 305h1v1h-1zM370 344h1v1h-1zM262 390h1v1h-1zM539 341h1v1h-1zM333 359h1v1h-1zM218 316h1v1h-1zM529 323h1v1h-1zM249 376h1v1h-1zM552 358h1v1h-1zM228 292h1v1h-1zM467 316h1v1h-1zM361 314h1v1h-1zM419 366h1v1h-1zM210 393h1v1h-1zM315 347h1v1h-1zM394 332h1v1h-1zM307 289h1v1h-1zM375 318h1v1h-1zM286 331h1v1h-1zM465 393h1v1h-1zM390 311h1v1h-1zM351 286h1v1h-1zM437 397h1v1h-1zM435 291h1v1h-1zM288 329h1v1h-1zM460 300h1v1h-1zM490 358h1v1h-1zM268 379h1v1h-1zM258 342h1v1h-1zM249 312h1v1h-1zM525 300h1v1h-1zM390 323h1v1h-1zM408 337h1v1h-1zM283 311h1v1h-1zM533 395h1v1h-1zM494 323h1v1h-1zM475 292h1v1h-1zM506 301h1v1h-1zM229 340h1v1h-1zM300 301h1v1h-1zM472 360h1v1h-1zM442 394h1v1h-1zM253 343h1v1h-1zM209 370h1v1h-1zM332 332h1v1h-1zM495 342h1v1h-1zM448 323h1v1h-1zM389 293h1v1h-1zM458 334h1v1h-1zM551 310h1v1h-1zM211 348h1v1h-1zM336 382h1v1h-1zM272 337h1v1h-1zM260 375h1v1h-1zM550 351h1v1h-1zM252 331h1v1h-1zM423 393h1v1h-1zM201 399h1v1h-1zM315 315h1v1h-1zM472 289h1v1h-1zM332 348h1v1h-1zM349 349h1v1h-1zM391 339h1v1h-1zM476 298h1v1h-1zM417 380h1v1h-1zM301 369h1v1h-1zM337 327h1v1h-1zM296 344h1v1h-1zM316 377h1v1h-1zM362 400h1v1h-1zM412 319h1v1h-1zM453 300h1v1h-1zM468 380h1v1h-1zM328 326h1v1h-1zM346 334h1v1h-1zM460 381h1v1h-1zM198 366h1v1h-1zM483 289h1v1h-1zM438 361h1v1h-1zM428 360h1v1h-1zM263 334h1v1h-1zM435 302h1v1h-1zM354 330h1v1h-1zM203 362h1v1h-1zM249 292h1v1h-1zM318 332h1v1h-1zM230 330h1v1h-1zM508 398h1v1h-1zM374 305h1v1h-1zM239 314h1v1h-1zM487 379h1v1h-1zM467 323h1v1h-1zM530 324h1v1h-1zM479 400h1v1h-1zM531 365h1v1h-1zM446 373h1v1h-1zM489 371h1v1h-1zM303 345h1v1h-1zM483 320h1v1h-1zM202 366h1v1h-1zM364 320h1v1h-1zM352 381h1v1h-1zM325 383h1v1h-1zM536 367h1v1h-1zM289 302h1v1h-1zM504 375h1v1h-1zM200 397h1v1h-1zM228 302h1v1h-1zM204 378h1v1h-1zM503 397h1v1h-1zM306 355h1v1h-1zM340 349h1v1h-1zM403 317h1v1h-1zM485 383h1v1h-1zM446 361h1v1h-1zM433 393h1v1h-1zM368 383h1v1h-1zM455 350h1v1h-1zM349 297h1v1h-1zM348 384h1v1h-1zM528 366h1v1h-1zM539 294h1v1h-1zM275 351h1v1h-1zM413 285h1v1h-1zM501 340h1v1h-1zM340 300h1v1h-1zM370 346h1v1h-1zM304 318h1v1h-1zM415 398h1v1h-1zM474 396h1v1h-1zM474 328h1v1h-1zM417 356h1v1h-1zM220 357h1v1h-1zM547 353h1v1h-1zM381 347h1v1h-1zM429 287h1v1h-1zM333 397h1v1h-1zM422 399h1v1h-1zM329 382h1v1h-1zM234 318h1v1h-1zM381 371h1v1h-1zM208 387h1v1h-1zM534 334h1v1h-1zM243 360h1v1h-1zM347 325h1v1h-1zM334 367h1v1h-1zM476 382h1v1h-1zM344 321h1v1h-1zM211 323h1v1h-1zM441 353h1v1h-1zM216 314h1v1h-1zM223 388h1v1h-1zM289 373h1v1h-1zM315 318h1v1h-1zM524 384h1v1h-1zM379 350h1v1h-1zM455 300h1v1h-1zM335 352h1v1h-1zM471 326h1v1h-1zM527 313h1v1h-1zM231 317h1v1h-1zM476 357h1v1h-1zM238 357h1v1h-1zM310 396h1v1h-1zM231 346h1v1h-1zM505 395h1v1h-1zM464 337h1v1h-1zM245 336h1v1h-1zM527 353h1v1h-1zM491 387h1v1h-1zM466 363h1v1h-1zM504 339h1v1h-1zM460 383h1v1h-1zM531 294h1v1h-1zM329 287h1v1h-1zM388 378h1v1h-1zM199 377h1v1h-1zM287 390h1v1h-1zM531 383h1v1h-1zM562 298h1v1h-1zM359 304h1v1h-1zM250 336h1v1h-1zM270 357h1v1h-1zM302 377h1v1h-1zM529 340h1v1h-1zM210 398h1v1h-1zM466 312h1v1h-1zM291 388h1v1h-1zM361 353h1v1h-1zM443 286h1v1h-1zM397 286h1v1h-1zM486 398h1v1h-1zM226 376h1v1h-1zM244 285h1v1h-1zM504 353h1v1h-1zM330 310h1v1h-1zM528 300h1v1h-1zM262 356h1v1h-1zM254 376h1v1h-1zM320 372h1v1h-1zM258 387h1v1h-1zM387 394h1v1h-1zM367 337h1v1h-1zM273 360h1v1h-1zM527 364h1v1h-1zM373 349h1v1h-1zM295 331h1v1h-1zM357 391h1v1h-1zM440 307h1v1h-1zM423 354h1v1h-1zM214 342h1v1h-1zM514 300h1v1h-1zM280 299h1v1h-1zM370 356h1v1h-1zM508 360h1v1h-1zM225 317h1v1h-1zM263 386h1v1h-1zM545 384h1v1h-1zM261 325h1v1h-1zM534 306h1v1h-1zM435 349h1v1h-1zM437 344h1v1h-1zM306 310h1v1h-1zM272 302h1v1h-1zM504 333h1v1h-1zM490 379h1v1h-1zM400 355h1v1h-1zM476 382h1v1h-1zM350 387h1v1h-1zM530 351h1v1h-1zM415 396h1v1h-1zM344 339h1v1h-1zM390 319h1v1h-1zM237 398h1v1h-1zM214 362h1v1h-1zM304 337h1v1h-1zM203 389h1v1h-1zM412 333h1v1h-1zM223 397h1v1h-1zM523 290h1v1h-1zM426 297h1v1h-1zM546 391h1v1h-1zM224 330h1v1h-1zM368 316h1v1h-1zM273 363h1v1h-1zM382 330h1v1h-1zM203 371h1v1h-1zM261 396h1v1h-1zM542 350h1v1h-1zM539 297h1v1h-1zM324 343h1v1h-1zM390 328h1v1h-1zM459 385h1v1h-1zM337 337h1v1h-1zM323 310h1v1h-1zM412 318h1v1h-1zM426 321h1v1h-1zM468 349h1v1h-1zM374 338h1v1h-1zM310 368h1v1h-1zM389 306h1v1h-1z" fill="#1a9a1a" opacity="0.8"/>
<!-- dark green upper -->
<path d="M302 257 L342 252 L395 286 L360 287.5 L352.5 292.5 L356 315 L331 311 L315 307.5 L290 306 L222 321 L200 327 Z" fill="#00c000"/>
<path d="M200 327 L222 321 L290 306 L315 307.5" fill="none" stroke="#30a800" stroke-width="2.5"/>
<path d="M360 287.5 L395 285.5" fill="none" stroke="#30b000" stroke-width="2"/>
<!-- fan white bottom edge -->
<path d="M194.4 329.4 L295 345.6 L343.3 355 L446.7 376.7 L562.7 399.3" fill="none" stroke="#f4f4f4" stroke-width="1.3"/>
<!-- left red band -->
<path d="M178 326 L302 256.6 L302 258.4 L194.4 329.4 Z" fill="#ff0000"/>
<!-- right red band -->
<path d="M342 251.6 L396 285.4 L430 306.8 L510 353.6 L563 387 L565 389.6 L562.7 399.3 L510 360.5 L430 311 L342 253.6 Z" fill="#ff0000"/>
<!-- navy line -->
<path d="M235 314.3 L306 257.5" stroke="#142060" stroke-width="1.6"/>
<!-- red ping lines -->
<g stroke="#ff1010" stroke-width="0.9" fill="none">
<path d="M348 258 L443 376.0"/>
<path d="M352 262 L448 377.0"/>
<path d="M356 266 L480 383.2"/>
<path d="M362 270 L500 387.1"/>
<path d="M366 274 L507 388.5"/>
<path d="M372 277 L547 396.3"/>
<path d="M378 281 L557 398.2"/>
</g>
<g stroke="#ff1010" stroke-width="1" stroke-dasharray="4 3" fill="none">
<path d="M350 258 L440 318"/>
<path d="M356 258 L470 330"/>
<path d="M300 262 L205 330"/>
<path d="M300 268 L222 332"/>
<path d="M296 282 L240 335" stroke-dasharray="3 4"/>
<path d="M327 269 L328 284"/>
<path d="M328 320 L328.5 348"/>
</g>
<path d="M331 274 L343 355" stroke="#ff0000" stroke-width="1.1"/>
<path d="M330 259 L331 274" stroke="#ff0000" stroke-width="1" stroke-dasharray="3 3"/>
<!-- white patch near left edge -->
<path d="M212 331 L226 321 L230 321 L217 332 Z" fill="#f0f0f0"/>
<!-- boat hull -->
<path d="M267 232 L378 232 C378 242 368 248 350 251 C335 254 315 257 295 257 C283 256 272 246 267 232 Z" fill="url(#hull)"/>
<!-- white deck -->
<path d="M267.5 232 L268 228 Q269 224.5 274 224 L307 224 L307 225 L331 227 L331 232 Z" fill="#f6f6f6"/>
<path d="M268 229 Q270 226 275 225.5 L290 225.5" stroke="#d8d8d8" stroke-width="1" fill="none"/>
<!-- cabin -->
<path d="M280.5 205 L346 200.5 L348.5 201 L349 226 L351 231 L331 231 L331 227 L307 225 L281 225 L281 220 L285.5 220 Z" fill="#f4f422"/>
<path d="M281 220 L307 220 L307 225 L281 225 Z" fill="#c8dc18"/>
<path d="M284 223.5 Q292 221 300 223.5 L300 225 L284 225 Z" fill="#8a9410"/>
<path d="M281 204.5 L346 200.8 L347 202.5 L282 206 Z" fill="#f0a010"/>
<path d="M281.5 206 L322 205 L322 220 L285.5 220 Z" fill="#5c8a90"/><path d="M308 205.3 L322 205 L322 220 L308 220 Z" fill="#6a9c9c"/>
<path d="M322 205 L340 204.5 L340 220 L322 220 Z" fill="#b8f2f6"/>
<g stroke="#f4f422" stroke-width="1.3" fill="none">
<path d="M281 206 L285.5 220 M290 206 L293 220 M306.5 205.5 L309 220"/></g><g stroke="#c8c820" stroke-width="1" fill="none"><path d="M328 205 L326 220 M333 205 L331 220 M337.5 205 L336 220"/>
</g>
<!-- mast -->
<path d="M314 178 L314 199" stroke="#6a6a6a" stroke-width="2"/>
<path d="M307 183 L321 183 M305 191 L324 191" stroke="#6e6e6e" stroke-width="1.6"/>
<path d="M312.5 199 L316 199 L317 203 L312 203 Z" fill="#c0d020"/>
<!-- disc -->
<path d="M265 121 L340 121 L341 123.5 L264 123.5 Z" fill="#202020"/>
<path d="M265 123 L340 123 Q343 124 343 127 L343 131 Q342 133.3 339 133.3 L266 133.3 Q263 133 263 130.5 L263 126.5 Q263 123.5 265 123 Z" fill="url(#disc)"/>
<path d="M265 123 L340 123 Q343 124 343 127 L343 131 Q342 133.3 339 133.3 L266 133.3 Q263 133 263 130.5 L263 126.5 Q263 123.5 265 123 Z" fill="url(#discv)"/><rect x="269" y="133" width="67" height="1.5" fill="#5a5a5a"/>
<rect x="287" y="124" width="30" height="10.5" fill="url(#discc)"/>
<!-- arrow + lines -->
<path d="M302.5 149 L310 157.8 L295 157.8 Z" fill="#7c7c7c"/>
<path d="M302.6 157.5 L302.6 357.6 L111 357.6" fill="none" stroke="#8e8e8e" stroke-width="1.1"/>
<ellipse cx="109.3" cy="357" rx="2.2" ry="7.8" fill="none" stroke="#8a8a8a" stroke-width="0.9"/>
<!-- ring -->
<ellipse cx="82.3" cy="356.5" rx="14.3" ry="35.8" fill="url(#ring)"/>
<ellipse cx="85.5" cy="356.5" rx="10.8" ry="34.5" fill="#3a3a3a"/>
<ellipse cx="83.2" cy="356.5" rx="6" ry="33.5" fill="#011a40"/>
<rect x="67" y="345" width="9" height="27" fill="#c8c8c8" clip-path="url(#ringclip)"/>
<!-- labels -->
<text x="145.5" y="311.5" transform="rotate(7.6 145.5 311.5)" font-family="Liberation Sans" font-size="16" fill="#10ff10" stroke="#ffffff" stroke-width="1.3" paint-order="stroke" letter-spacing="-0.2">25.6</text>
<text x="0" y="0" transform="translate(251 335.5) rotate(9) scale(1.2 1)" font-family="Liberation Sans" font-size="23" fill="#000" stroke="#ffffff" stroke-width="2.2" paint-order="stroke" letter-spacing="0.4">10.43</text>
</svg>
</div>
<!-- right panel -->
<div id="panel" class="a"></div>
<div class="a" style="left:603px;top:61px;width:347px;height:19px;background:#dcdde2"></div>
<div class="a" style="left:608px;top:65px;font-weight:bold;font-size:11.3px;color:#4b5068">Sensors</div>
<svg class="a" style="left:934px;top:66px" width="10" height="10" viewBox="0 0 10 10"><path d="M3 1 H7 V6 H8.5 V7 H1.5 V6 H3 Z M5 7 V10" fill="#7a7d88" stroke="#7a7d88" stroke-width="0.8"/></svg>
<div class="a" style="left:616px;top:95px;color:#1c1c48;letter-spacing:-0.4px">Sensors</div>
<!-- grid -->
<div class="a" style="left:616px;top:109px;width:322px;height:92px;background:#fff;border:1px solid #a0a2ab"></div>
<div class="a" style="left:617px;top:110px;width:320px;height:19px;background:linear-gradient(#f7f7f9,#eeeff2);border-bottom:1px solid #d5d6dc"></div>
<div class="a" style="left:617px;top:129px;width:320px;height:19px;background:#dfe8f9;border-bottom:1px solid #d5d6dc"></div>
<div class="a" style="left:641px;top:110px;width:1px;height:38px;background:#d5d6dc"></div>
<div class="a" style="left:788px;top:110px;width:1px;height:38px;background:#d5d6dc"></div>
<div class="a" style="left:617px;top:129px;width:25px;height:19px;background:#fff;border:1px dotted #222"></div>
<div class="a" style="left:621px;top:111px;color:#1c1c48;letter-spacing:1px">...</div>
<div class="a" style="left:646px;top:113px;color:#1c1c48;letter-spacing:-0.4px">Name</div>
<div class="a" style="left:793px;top:113px;color:#1c1c48;letter-spacing:-0.4px">Color scheme</div>
<div class="a" style="left:646px;top:133px;color:#1c1c48;letter-spacing:-0.4px">Kongsberg MB</div>
<div class="a" style="left:793px;top:133px;color:#1c1c48;letter-spacing:-0.4px">Depth</div>
<div class="a" style="left:623px;top:133px;width:13px;height:13px;border:1px solid #8d9098;background:#e4e5ea"></div>
<svg class="a" style="left:622px;top:129px" width="18" height="18" viewBox="0 0 18 18"><path d="M3 10 L6.5 15 L15 2" stroke="#2a2a3a" stroke-width="2" fill="none"/></svg>

<!-- tab -->
<div class="a" style="left:616px;top:227px;width:318px;height:381px;background:#fff;border:1px solid #a0a2ab"></div>
<div class="a" style="left:619px;top:206px;width:86px;height:22px;background:#fff;border:1px solid #a0a2ab;border-bottom:none"></div>
<div class="a" style="left:629px;top:210px;color:#1c1c48;letter-spacing:-0.35px">Echo Sounder</div>
<!-- scrollbar -->
<div class="a" style="left:916px;top:228px;width:17px;height:379px;background:#f1f1f3"></div>
<div class="a" style="left:921px;top:234px;width:0;height:0;border-left:4px solid transparent;border-right:4px solid transparent;border-bottom:4px solid #8a8c96"></div>
<div class="a" style="left:921px;top:596px;width:0;height:0;border-left:4px solid transparent;border-right:4px solid transparent;border-top:4px solid #8a8c96"></div>
<div class="a" style="left:921px;top:244px;width:8px;height:338px;border:1px solid #b5b7be;border-radius:4px;background:linear-gradient(90deg,#e6e7eb,#f6f6f8)"></div>

<!-- property rows -->
<div class="a lbl" style="top:244px">Time window (s)</div>
<div class="a lbl" style="top:268px">Marker type</div>
<div class="a lbl" style="top:292px">Marker size</div>
<div class="a lbl" style="top:317px">Color map</div>
<div class="a lbl" style="top:341px">Maximum</div>
<div class="a lbl" style="top:365px">Minimum</div>
<div class="a lbl" style="top:389px">Overflow</div>
<div class="a lbl" style="top:413px">Underflow</div>
<div class="a lbl" style="top:463px">Flagged point color</div>
<div class="a lbl" style="top:513px">Fill color</div>
<div class="a lbl" style="top:537px">Line color</div>
<div class="a lbl" style="top:561px">Line width</div>
<div class="a lbl" style="top:585px">Label Settings</div>

<div class="a ed" style="top:240px"></div><div class="a ev" style="top:244px">60</div>
<div class="a up" style="top:243px"></div><div class="a dd" style="top:252px"></div>
<div class="a ed" style="top:264px"></div><div class="a ev" style="top:268px">Sphere</div><div class="a dd" style="top:272px"></div>
<div class="a ed" style="top:288px"></div><div class="a ev" style="top:292px">Normal</div><div class="a dd" style="top:296px"></div>
<div class="a ed" style="top:313px"></div>
<div class="a" style="left:728px;top:317px;width:40px;height:12px;background:linear-gradient(90deg,#fff 0%,#ff4040 8%,#ff0000 20%,#ffa000 35%,#ffff00 45%,#60ff80 55%,#00e0ff 65%,#0060ff 80%,#0000c0 90%,#00003a 100%)"></div>
<div class="a ev" style="left:772px;top:317px">qps.clr</div><div class="a dd" style="top:321px"></div>
<div class="a ed" style="top:337px"></div><div class="a ev" style="top:341px">20.00</div>
<div class="a up" style="top:340px"></div><div class="a dd" style="top:349px"></div>
<div class="a ed" style="top:361px"></div><div class="a ev" style="top:365px">0.00</div>
<div class="a up" style="top:364px"></div><div class="a dd" style="top:373px"></div>
<div class="a ed" style="top:385px"></div><div class="a sw" style="top:390px;background:#000"></div><div class="a ev" style="left:756px;top:389px">Black</div><div class="a dd" style="top:393px"></div>
<div class="a ed" style="top:409px"></div><div class="a sw" style="top:414px;background:#fff"></div><div class="a ev" style="left:756px;top:413px">White</div><div class="a dd" style="top:417px"></div>

<div class="a btn" style="top:433px"></div><div class="a btt" style="left:647px;width:220px;top:438px">Show flagged points</div>
<div class="a ed" style="top:459px"></div><div class="a sw" style="top:464px;background:#f00"></div><div class="a ev" style="left:756px;top:463px">Red</div><div class="a dd" style="top:467px"></div>
<div class="a btn" style="top:483px"></div><div class="a btt" style="left:647px;width:220px;top:488px">Show ping fan</div>
<div class="a ed" style="top:509px"></div><div class="a sw" style="top:514px;background:#e2fde2"></div><div class="a ev" style="left:756px;top:513px">30, 0, 255, 0</div><div class="a dd" style="top:517px"></div>
<div class="a ed" style="top:533px"></div><div class="a sw" style="top:538px;background:#2ff02f"></div><div class="a ev" style="left:756px;top:537px">200, 0, 255, 0</div><div class="a dd" style="top:541px"></div>
<div class="a ed" style="top:557px"></div><div class="a ev" style="top:561px">1</div>
<div class="a up" style="top:560px"></div><div class="a dd" style="top:569px"></div>
<div class="a ed" style="top:581px"></div><div class="a ev" style="top:585px">Port, Nadir, Starboard</div><div class="a dd" style="top:589px"></div>
<!-- check icons on buttons -->
<svg class="a" style="left:633px;top:436px" width="16" height="16" viewBox="0 0 16 16"><rect x="1.5" y="4.5" width="10" height="10" fill="#e8e8ea" stroke="#6a6c74"/><path d="M3 8 L6 12 L14 2" stroke="#22b022" stroke-width="2.5" fill="none"/></svg>
<svg class="a" style="left:633px;top:486px" width="16" height="16" viewBox="0 0 16 16"><rect x="1.5" y="4.5" width="10" height="10" fill="#e8e8ea" stroke="#6a6c74"/><path d="M3 8 L6 12 L14 2" stroke="#22b022" stroke-width="2.5" fill="none"/></svg>

<!-- colorbar -->
<div class="a" style="left:872px;top:240px;width:32px;height:334px;background:linear-gradient(#000010 0%,#00005a 10.5%,#0000c8 16%,#0000ff 20%,#0040ff 25%,#0090ff 30%,#00d0ff 35%,#00ffff 40%,#60ff90 48%,#b0ff40 54%,#ffff00 60%,#ffa000 66%,#ff5000 72.5%,#ff0000 79.6%,#ff5050 85%,#ffa0a0 91.6%,#ffeaea 98%,#ffffff 100%)"></div>
<div class="a cbl" style="top:240px;color:#e0e0f0">20.0</div>
<div class="a cbl" style="top:295px;color:#c0d040">16.0</div>
<div class="a cbl" style="top:362px;color:#a01030">12.0</div>
<div class="a cbl" style="top:429px;color:#303090">8.0</div>
<div class="a cbl" style="top:496px;color:#30b0b0">4.0</div>
<div class="a cbl" style="top:563px;color:#202040">0.0</div>
<div class="a" style="left:872px;top:579px;width:32px;height:22px;border:1px solid #a0a2ab;border-radius:3px;background:linear-gradient(#f0f0f3,#dcdde2)"></div>
<div class="a" style="left:872px;top:584px;width:32px;text-align:center;color:#1c1c48">Auto</div>

<!-- bottom tabs -->
<div class="a" style="left:607px;top:625px;width:1px;height:24px;background:#c8cad0"></div>
<div class="a" style="left:687px;top:624px;width:263px;height:28px;background:linear-gradient(#dcdde2,#e9eaee)"></div>
<div class="a" style="left:687px;top:624px;width:1px;height:28px;background:#d0d1d6"></div>
<svg class="a" style="left:616px;top:628px" width="18" height="18" viewBox="0 0 18 18" fill="none" stroke="#111" stroke-width="1.4"><path d="M1.5 1.5 H16.5 M6.5 3 Q9 5 11.5 3 M4.5 5 Q9 10 13.5 5 M3 8 Q9 14.5 15 8 M1.5 11 Q9 20 16.5 11"/></svg>
<div class="a" style="left:637px;top:631px;color:#1c1c48;font-size:11.3px;letter-spacing:-0.5px">Sensors</div>
<svg class="a" style="left:697px;top:629px" width="18" height="16" viewBox="0 0 18 16" fill="none" stroke="#222" stroke-width="1.2"><path d="M4 1 V5 M2 5 H7 V8 H12 C14 8 15 6 16 7 V12 H2 Z M1 14 H17"/></svg>
<div class="a" style="left:717px;top:631px;color:#1c1c48;font-size:11.3px;letter-spacing:-0.5px">Vessels</div>
<svg class="a" style="left:777px;top:628px" width="12" height="18" viewBox="0 0 12 18" fill="none" stroke="#222" stroke-width="1.2"><path d="M6 1 C3 1 1 3.5 1 6 C1 9 3.5 10 3.5 12.5 H8.5 C8.5 10 11 9 11 6 C11 3.5 9 1 6 1 Z M4 14.5 H8 M4.5 16.5 H7.5"/></svg>
<div class="a" style="left:795px;top:631px;color:#1c1c48;font-size:11.3px;letter-spacing:-0.25px">Environment</div>
</body></html>
